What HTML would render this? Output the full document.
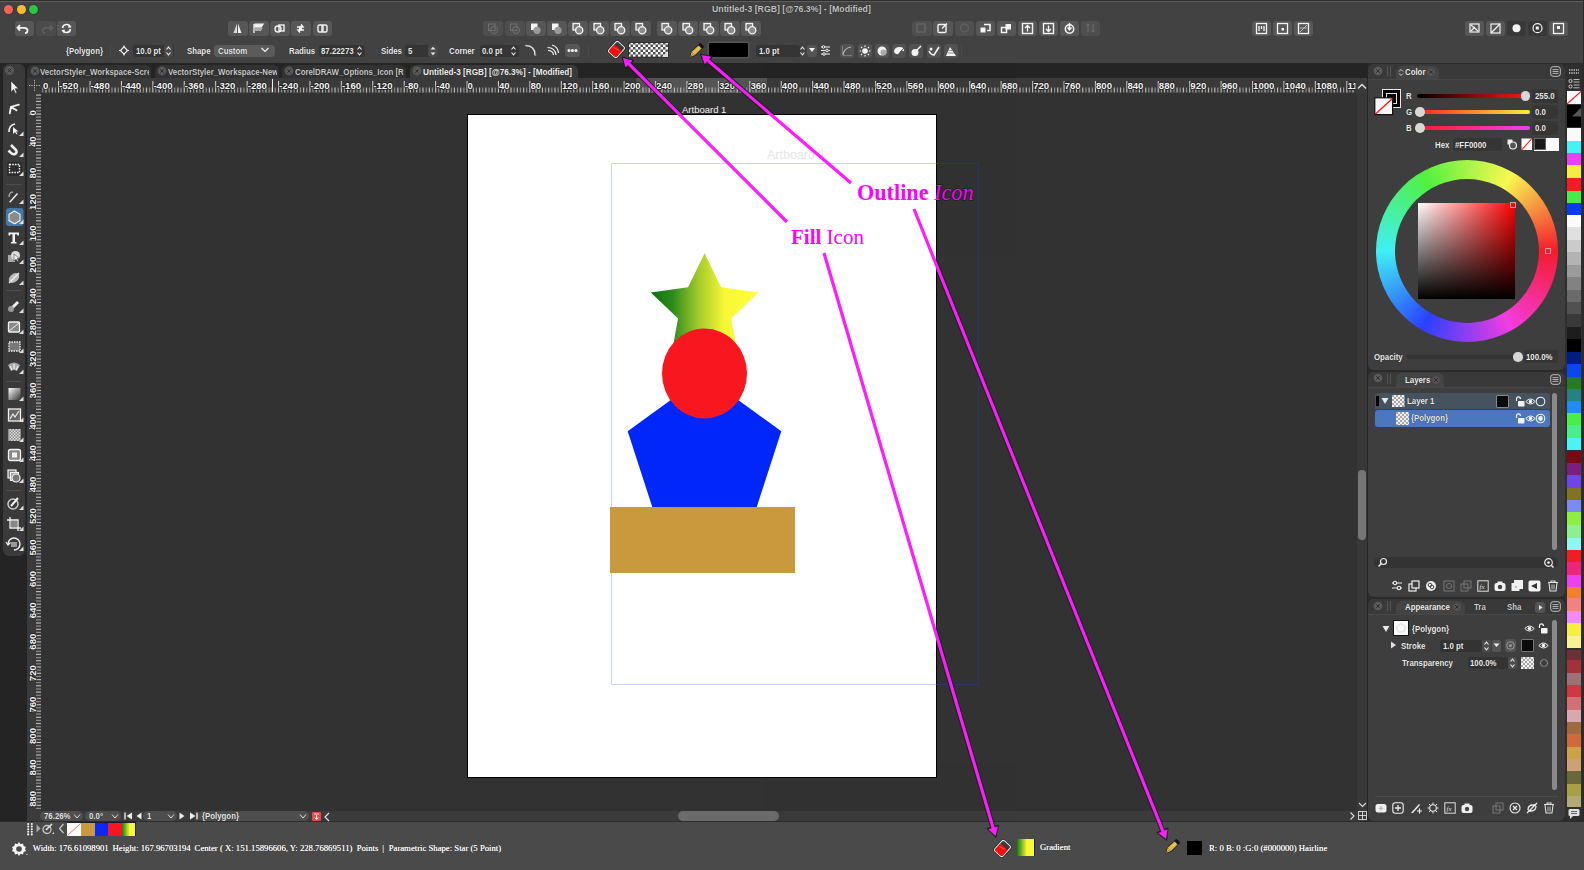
<!DOCTYPE html>
<html><head><meta charset="utf-8"><style>
*{box-sizing:border-box;margin:0;padding:0}
html,body{width:1584px;height:870px;overflow:hidden;background:#424242;font-family:"Liberation Sans",sans-serif;color:#ececec;position:relative}
.a{position:absolute}
.t{position:absolute;white-space:nowrap;font-weight:bold;font-size:9px;line-height:10px;color:#ececec;transform:scaleX(.87);transform-origin:0 0;text-shadow:0 0 1px rgba(0,0,0,.85)}
.btn{position:absolute;top:21px;width:19px;height:14px;background:#575757;border-radius:3px}
.btn.d{background:#4b4b4b}
.ib{position:absolute;width:14px;height:14px;background:#575757;border-radius:3px}
</style></head><body>
<div class="a" style="left:0px;top:0px;width:1584px;height:1px;background:#2e2e2e;"></div>
<div class="a" style="left:0px;top:1px;width:1584px;height:1px;background:#5e5e5e;"></div>
<div class="a" style="left:1583px;top:0px;width:1px;height:63px;background:#2a2a2a;"></div>
<div class="a" style="left:0px;top:63px;width:1584px;height:15px;background:#242424;"></div>
<div class="a" style="left:0px;top:63px;width:27px;height:758px;background:#242424;"></div>
<div class="a" style="left:2.9px;top:64px;width:22.4px;height:492.4px;background:#3a3a3a;border-radius:6px"></div>
<div class="a" style="left:27px;top:78px;width:1341px;height:15px;background:#3a3a3a;border-top-right-radius:7px"></div>
<div class="a" style="left:27px;top:93px;width:14px;height:718px;background:#3a3a3a;"></div>
<div class="a" style="left:41px;top:93px;width:1316px;height:718px;background:#323232;"></div>
<div class="a" style="left:1357px;top:93px;width:11px;height:718px;background:#383838;"></div>
<div class="a" style="left:27px;top:811px;width:1341px;height:10px;background:#3b3b3b;"></div>
<div class="a" style="left:0px;top:821px;width:1584px;height:49px;background:#4a4a4a;"></div>
<div class="a" style="left:0px;top:821px;width:1584px;height:1px;background:#2c2c2c;"></div>
<div class="a" style="left:1368px;top:63px;width:216px;height:758px;background:#2b2b2b;"></div>
<svg width="0" height="0" style="position:absolute"><defs><pattern id="chk5" width="5" height="5" patternUnits="userSpaceOnUse"><rect width="5" height="5" fill="#fafafa"/><rect width="2.5" height="2.5" fill="#4e4e4e"/><rect x="2.5" y="2.5" width="2.5" height="2.5" fill="#4e4e4e"/></pattern><pattern id="chk4" width="4" height="4" patternUnits="userSpaceOnUse"><rect width="4" height="4" fill="#f0f0f0"/><rect width="2" height="2" fill="#a8a8a8"/><rect x="2" y="2" width="2" height="2" fill="#a8a8a8"/></pattern></defs></svg>
<div class="a" style="left:4.1px;top:4.6px;width:9.2px;height:9.2px;border-radius:50%;background:#fe5f57;box-shadow:0 0 0 0.6px #1f3b45"></div>
<div class="a" style="left:16.6px;top:4.6px;width:9.2px;height:9.2px;border-radius:50%;background:#febc2e;box-shadow:0 0 0 0.6px #1f3b45"></div>
<div class="a" style="left:29.0px;top:4.6px;width:9.2px;height:9.2px;border-radius:50%;background:#28c840;box-shadow:0 0 0 0.6px #3b1f45"></div>
<div class="t" style="left:712px;top:4px;font-size:9px;color:#c4c4c4;transform:scaleX(0.97)">Untitled-3 [RGB] [@76.3%] - [Modified]</div>
<div class="a" style="left:14.7px;top:21px;width:19.5px;height:14.5px;background:#575757;border-radius:3px"></div>
<svg class="a" style="left:14.7px;top:21px;opacity:1" width="19" height="14" viewBox="0 0 19 14"><path d="M5 4 L2.5 6.8 L5 9.6 M2.8 6.8 H9 Q12.5 6.8 12.5 9.5 Q12.5 12 10 12.2" stroke="#f4f4f4" stroke-width="1.8" fill="none"/></svg>
<div class="a" style="left:36.2px;top:21px;width:19.5px;height:14.5px;background:#4b4b4b;border-radius:3px"></div>
<svg class="a" style="left:36.2px;top:21px;opacity:0.45" width="19" height="14" viewBox="0 0 19 14"><path d="M14 4 L16.5 6.8 L14 9.6 M16.2 6.8 H10 Q6.5 6.8 6.5 9.5 Q6.5 12 9 12.2" stroke="#777" stroke-width="1.8" fill="none"/></svg>
<div class="a" style="left:56.9px;top:21px;width:19.5px;height:14.5px;background:#575757;border-radius:3px"></div>
<svg class="a" style="left:56.9px;top:21px;opacity:1" width="19" height="14" viewBox="0 0 19 14"><path d="M5.5 7 A4.2 4.2 0 0 1 13.5 6 M13.5 8 A4.2 4.2 0 0 1 5.5 9" stroke="#f4f4f4" stroke-width="1.6" fill="none"/><path d="M12 3.5 L14.5 6.5 L11 6.8Z M7 12 L4.5 9 L8 8.8Z" fill="#f4f4f4"/></svg>
<div class="a" style="left:228px;top:21px;width:19.5px;height:14.5px;background:#575757;border-radius:3px"></div>
<svg class="a" style="left:228px;top:21px;opacity:1" width="19" height="14" viewBox="0 0 19 14"><path d="M9 2.5 L5.5 12 H9Z" fill="#ddd"/><path d="M10 2.5 L13.5 12 H10Z" fill="#f4f4f4"/></svg>
<div class="a" style="left:249px;top:21px;width:19.5px;height:14.5px;background:#575757;border-radius:3px"></div>
<svg class="a" style="left:249px;top:21px;opacity:1" width="19" height="14" viewBox="0 0 19 14"><path d="M5 3 V12 M5.5 3.2 H14 L12 6 H5.5" stroke="#f4f4f4" stroke-width="1.3" fill="#f4f4f4"/><path d="M5.5 6.5 H14 L12 10 H5.5Z" fill="#aaa"/></svg>
<div class="a" style="left:270.4px;top:21px;width:19.5px;height:14.5px;background:#575757;border-radius:3px"></div>
<svg class="a" style="left:270.4px;top:21px;opacity:1" width="19" height="14" viewBox="0 0 19 14"><circle cx="8" cy="8" r="3" stroke="#f4f4f4" stroke-width="1.4" fill="none"/><rect x="9" y="4" width="5" height="6" stroke="#f4f4f4" stroke-width="1.4" fill="none"/></svg>
<div class="a" style="left:291.4px;top:21px;width:19.5px;height:14.5px;background:#575757;border-radius:3px"></div>
<svg class="a" style="left:291.4px;top:21px;opacity:1" width="19" height="14" viewBox="0 0 19 14"><path d="M6 6 H12 L10 3.5 M13 9 H7 L9 11.5" stroke="#f4f4f4" stroke-width="1.5" fill="none"/><rect x="8" y="5.5" width="3" height="4" fill="#f4f4f4"/></svg>
<div class="a" style="left:312.5px;top:21px;width:19.5px;height:14.5px;background:#575757;border-radius:3px"></div>
<svg class="a" style="left:312.5px;top:21px;opacity:1" width="19" height="14" viewBox="0 0 19 14"><rect x="5" y="4" width="5" height="7" rx="1.5" stroke="#f4f4f4" stroke-width="1.4" fill="none"/><rect x="9" y="4" width="5" height="7" rx="1.5" stroke="#f4f4f4" stroke-width="1.4" fill="none"/></svg>
<div class="a" style="left:483px;top:21px;width:19.5px;height:14.5px;background:#4f4f4f;border-radius:3px"></div>
<svg class="a" style="left:483px;top:21px;opacity:0.45" width="19" height="14" viewBox="0 0 19 14"><rect x="5.5" y="3" width="6.5" height="6.5" stroke="#9a9a9a" stroke-width="1" fill="none"/><circle cx="11" cy="9" r="3.5" stroke="#9a9a9a" stroke-width="1" fill="none"/></svg>
<div class="a" style="left:505px;top:21px;width:19.5px;height:14.5px;background:#4f4f4f;border-radius:3px"></div>
<svg class="a" style="left:505px;top:21px;opacity:0.45" width="19" height="14" viewBox="0 0 19 14"><rect x="5.5" y="3" width="6.5" height="6.5" stroke="#9a9a9a" stroke-width="1" fill="none"/><circle cx="11" cy="9" r="3.5" stroke="#9a9a9a" stroke-width="1" fill="none"/></svg>
<div class="a" style="left:526px;top:21px;width:19.5px;height:14.5px;background:#565656;border-radius:3px"></div>
<svg class="a" style="left:526px;top:21px;opacity:1" width="19" height="14" viewBox="0 0 19 14"><rect x="5" y="2.5" width="6.5" height="6.5" fill="#f4f4f4"/><circle cx="11" cy="9.3" r="3.6" fill="#9a9a9a"/></svg>
<div class="a" style="left:547px;top:21px;width:19.5px;height:14.5px;background:#565656;border-radius:3px"></div>
<svg class="a" style="left:547px;top:21px;opacity:1" width="19" height="14" viewBox="0 0 19 14"><rect x="5" y="2.5" width="6.5" height="6.5" fill="#f4f4f4"/><circle cx="11" cy="9.3" r="3.6" fill="#9a9a9a"/></svg>
<div class="a" style="left:568px;top:21px;width:19.5px;height:14.5px;background:#565656;border-radius:3px"></div>
<svg class="a" style="left:568px;top:21px;opacity:1" width="19" height="14" viewBox="0 0 19 14"><rect x="5" y="2.5" width="6.5" height="6.5" stroke="#f4f4f4" stroke-width="1.3" fill="#777"/><circle cx="11.2" cy="9.3" r="3.6" stroke="#f4f4f4" stroke-width="1.3" fill="#8a8a8a"/></svg>
<div class="a" style="left:589px;top:21px;width:19.5px;height:14.5px;background:#565656;border-radius:3px"></div>
<svg class="a" style="left:589px;top:21px;opacity:1" width="19" height="14" viewBox="0 0 19 14"><rect x="5" y="2.5" width="6.5" height="6.5" stroke="#f4f4f4" stroke-width="1.3" fill="#777"/><circle cx="11.2" cy="9.3" r="3.6" stroke="#f4f4f4" stroke-width="1.3" fill="#8a8a8a"/></svg>
<div class="a" style="left:610px;top:21px;width:19.5px;height:14.5px;background:#565656;border-radius:3px"></div>
<svg class="a" style="left:610px;top:21px;opacity:1" width="19" height="14" viewBox="0 0 19 14"><rect x="5" y="2.5" width="6.5" height="6.5" stroke="#f4f4f4" stroke-width="1.3" fill="#777"/><circle cx="11.2" cy="9.3" r="3.6" stroke="#f4f4f4" stroke-width="1.3" fill="#8a8a8a"/></svg>
<div class="a" style="left:631px;top:21px;width:19.5px;height:14.5px;background:#565656;border-radius:3px"></div>
<svg class="a" style="left:631px;top:21px;opacity:1" width="19" height="14" viewBox="0 0 19 14"><rect x="5" y="2.5" width="6.5" height="6.5" stroke="#f4f4f4" stroke-width="1.3" fill="#777"/><circle cx="11.2" cy="9.3" r="3.6" stroke="#f4f4f4" stroke-width="1.3" fill="#8a8a8a"/></svg>
<div class="a" style="left:657px;top:21px;width:19.5px;height:14.5px;background:#575757;border-radius:3px"></div>
<svg class="a" style="left:657px;top:21px;opacity:1" width="19" height="14" viewBox="0 0 19 14"><rect x="5" y="2.5" width="6.5" height="6.5" stroke="#f4f4f4" stroke-width="1.3" fill="#777"/><circle cx="11.2" cy="9.3" r="3.6" stroke="#f4f4f4" stroke-width="1.3" fill="#8a8a8a"/></svg>
<div class="a" style="left:678px;top:21px;width:19.5px;height:14.5px;background:#575757;border-radius:3px"></div>
<svg class="a" style="left:678px;top:21px;opacity:1" width="19" height="14" viewBox="0 0 19 14"><rect x="5" y="2.5" width="6.5" height="6.5" stroke="#f4f4f4" stroke-width="1.3" fill="#777"/><circle cx="11.2" cy="9.3" r="3.6" stroke="#f4f4f4" stroke-width="1.3" fill="#8a8a8a"/></svg>
<div class="a" style="left:699px;top:21px;width:19.5px;height:14.5px;background:#575757;border-radius:3px"></div>
<svg class="a" style="left:699px;top:21px;opacity:1" width="19" height="14" viewBox="0 0 19 14"><rect x="5" y="2.5" width="6.5" height="6.5" stroke="#f4f4f4" stroke-width="1.3" fill="#777"/><circle cx="11.2" cy="9.3" r="3.6" stroke="#f4f4f4" stroke-width="1.3" fill="#8a8a8a"/></svg>
<div class="a" style="left:720px;top:21px;width:19.5px;height:14.5px;background:#575757;border-radius:3px"></div>
<svg class="a" style="left:720px;top:21px;opacity:1" width="19" height="14" viewBox="0 0 19 14"><rect x="5" y="2.5" width="6.5" height="6.5" stroke="#f4f4f4" stroke-width="1.3" fill="#777"/><circle cx="11.2" cy="9.3" r="3.6" stroke="#f4f4f4" stroke-width="1.3" fill="#8a8a8a"/></svg>
<div class="a" style="left:741px;top:21px;width:19.5px;height:14.5px;background:#575757;border-radius:3px"></div>
<svg class="a" style="left:741px;top:21px;opacity:1" width="19" height="14" viewBox="0 0 19 14"><rect x="5" y="2.5" width="6.5" height="6.5" stroke="#f4f4f4" stroke-width="1.3" fill="#777"/><circle cx="11.2" cy="9.3" r="3.6" stroke="#f4f4f4" stroke-width="1.3" fill="#8a8a8a"/></svg>
<div class="a" style="left:912px;top:21px;width:19.5px;height:14.5px;background:#4f4f4f;border-radius:3px"></div>
<svg class="a" style="left:912px;top:21px;opacity:0.45" width="19" height="14" viewBox="0 0 19 14"><rect x="5" y="3" width="8" height="8" stroke="#888" stroke-width="1.2" fill="none"/></svg>
<div class="a" style="left:933px;top:21px;width:19.5px;height:14.5px;background:#575757;border-radius:3px"></div>
<svg class="a" style="left:933px;top:21px;opacity:1" width="19" height="14" viewBox="0 0 19 14"><rect x="5" y="3.5" width="8" height="8" rx="1" stroke="#f4f4f4" stroke-width="1.4" fill="none"/><path d="M9 7.5 L14 2.5" stroke="#f4f4f4" stroke-width="1.5"/></svg>
<div class="a" style="left:954.5px;top:21px;width:19.5px;height:14.5px;background:#4f4f4f;border-radius:3px"></div>
<svg class="a" style="left:954.5px;top:21px;opacity:0.45" width="19" height="14" viewBox="0 0 19 14"><circle cx="9.5" cy="7" r="4" stroke="#777" stroke-width="1.3" fill="none"/></svg>
<div class="a" style="left:975.5px;top:21px;width:19.5px;height:14.5px;background:#575757;border-radius:3px"></div>
<svg class="a" style="left:975.5px;top:21px;opacity:1" width="19" height="14" viewBox="0 0 19 14"><rect x="4.5" y="6.5" width="5" height="5" fill="#f4f4f4"/><path d="M8 3.5 H14 V9.5 H11" stroke="#f4f4f4" stroke-width="1.6" fill="none"/></svg>
<div class="a" style="left:996.5px;top:21px;width:19.5px;height:14.5px;background:#575757;border-radius:3px"></div>
<svg class="a" style="left:996.5px;top:21px;opacity:1" width="19" height="14" viewBox="0 0 19 14"><rect x="4.5" y="6.5" width="5" height="5" stroke="#f4f4f4" stroke-width="1.5" fill="none"/><rect x="8.5" y="3" width="5.5" height="5.5" fill="#f4f4f4"/></svg>
<div class="a" style="left:1017.7px;top:21px;width:19.5px;height:14.5px;background:#575757;border-radius:3px"></div>
<svg class="a" style="left:1017.7px;top:21px;opacity:1" width="19" height="14" viewBox="0 0 19 14"><rect x="4.5" y="2.5" width="10" height="10" stroke="#f4f4f4" stroke-width="1.4" fill="none"/><path d="M9.5 10.5 V5 M7 7 L9.5 4.5 L12 7" stroke="#f4f4f4" stroke-width="1.4" fill="none"/></svg>
<div class="a" style="left:1038.6px;top:21px;width:19.5px;height:14.5px;background:#575757;border-radius:3px"></div>
<svg class="a" style="left:1038.6px;top:21px;opacity:1" width="19" height="14" viewBox="0 0 19 14"><rect x="4.5" y="2.5" width="10" height="10" stroke="#f4f4f4" stroke-width="1.4" fill="none"/><path d="M9.5 4.5 V10 M7 8 L9.5 10.5 L12 8" stroke="#f4f4f4" stroke-width="1.4" fill="none"/></svg>
<div class="a" style="left:1059.6px;top:21px;width:19.5px;height:14.5px;background:#575757;border-radius:3px"></div>
<svg class="a" style="left:1059.6px;top:21px;opacity:1" width="19" height="14" viewBox="0 0 19 14"><circle cx="9.5" cy="8" r="4.2" stroke="#f4f4f4" stroke-width="1.5" fill="none"/><path d="M9.5 2 V8.5 M7.5 6.5 L9.5 8.8 L11.5 6.5" stroke="#f4f4f4" stroke-width="1.5" fill="none"/></svg>
<div class="a" style="left:1080.8px;top:21px;width:19.5px;height:14.5px;background:#4f4f4f;border-radius:3px"></div>
<svg class="a" style="left:1080.8px;top:21px;opacity:0.45" width="19" height="14" viewBox="0 0 19 14"><path d="M7 3 V11 M12 3 V11 M5.5 4.5 L7 3 L8.5 4.5 M10.5 9.5 L12 11 L13.5 9.5" stroke="#8a8a8a" stroke-width="1.2" fill="none"/></svg>
<div class="a" style="left:1251.7px;top:21px;width:19.5px;height:14.5px;background:#575757;border-radius:3px"></div>
<svg class="a" style="left:1251.7px;top:21px;opacity:1" width="19" height="14" viewBox="0 0 19 14"><rect x="4.5" y="2.5" width="10" height="10" stroke="#f4f4f4" stroke-width="1.3" fill="none"/><path d="M7 5 V10 M9.5 5 V8 M12 5 V10" stroke="#f4f4f4" stroke-width="1.3"/></svg>
<div class="a" style="left:1272.9px;top:21px;width:19.5px;height:14.5px;background:#575757;border-radius:3px"></div>
<svg class="a" style="left:1272.9px;top:21px;opacity:1" width="19" height="14" viewBox="0 0 19 14"><rect x="4.5" y="2.5" width="10" height="10" stroke="#f4f4f4" stroke-width="1.3" fill="none"/><rect x="8.5" y="7" width="2.5" height="2.5" fill="#f4f4f4"/></svg>
<div class="a" style="left:1293.8px;top:21px;width:19.5px;height:14.5px;background:#575757;border-radius:3px"></div>
<svg class="a" style="left:1293.8px;top:21px;opacity:1" width="19" height="14" viewBox="0 0 19 14"><rect x="4.5" y="2.5" width="10" height="10" stroke="#f4f4f4" stroke-width="1.3" fill="none"/><path d="M6 11 L13 4 M6 7 H13" stroke="#bbb" stroke-width="1"/></svg>
<div class="a" style="left:1464.8px;top:21px;width:19.5px;height:14.5px;background:#575757;border-radius:3px"></div>
<svg class="a" style="left:1464.8px;top:21px;opacity:1" width="19" height="14" viewBox="0 0 19 14"><rect x="5" y="3" width="9" height="8" stroke="#f4f4f4" stroke-width="1.2" fill="none"/><path d="M6 4 L13 10 M6 10 L10 6" stroke="#f4f4f4" stroke-width="1.2"/></svg>
<div class="a" style="left:1485.8px;top:21px;width:19.5px;height:14.5px;background:#575757;border-radius:3px"></div>
<svg class="a" style="left:1485.8px;top:21px;opacity:1" width="19" height="14" viewBox="0 0 19 14"><rect x="5" y="3" width="9" height="9" stroke="#f4f4f4" stroke-width="1.2" fill="none"/><path d="M5 12 L14 3" stroke="#f4f4f4" stroke-width="1.2"/></svg>
<div class="a" style="left:1506.7px;top:21px;width:19.5px;height:14.5px;background:#383838;border-radius:3px"></div>
<svg class="a" style="left:1506.7px;top:21px;opacity:1" width="19" height="14" viewBox="0 0 19 14"><circle cx="9.5" cy="7.2" r="4" fill="#f4f4f4"/></svg>
<div class="a" style="left:1527.9px;top:21px;width:19.5px;height:14.5px;background:#383838;border-radius:3px"></div>
<svg class="a" style="left:1527.9px;top:21px;opacity:1" width="19" height="14" viewBox="0 0 19 14"><circle cx="9.5" cy="7.2" r="4.5" stroke="#f4f4f4" stroke-width="1.2" fill="none"/><rect x="7.8" y="5.5" width="3" height="3" fill="#f4f4f4"/></svg>
<div class="a" style="left:1548.9px;top:21px;width:19.5px;height:14.5px;background:#575757;border-radius:3px"></div>
<svg class="a" style="left:1548.9px;top:21px;opacity:1" width="19" height="14" viewBox="0 0 19 14"><rect x="4.5" y="2.5" width="10" height="10" stroke="#f4f4f4" stroke-width="1.3" fill="none"/><rect x="8" y="5" width="3" height="3" fill="#f4f4f4"/></svg>
<div class="t" style="left:66px;top:45.5px;font-size:9px;color:#ececec;font-weight:bold;">{Polygon}</div>
<div class="a" style="left:110px;top:44px;width:1px;height:13px;background:#4a4a4a;"></div>
<svg class="a" style="left:118px;top:44px;opacity:1" width="12" height="13" viewBox="0 0 12 13"><path d="M6 1.5 V11.5 M1 6.5 H11" stroke="#f4f4f4" stroke-width="1.1"/><rect x="3.5" y="4" width="5" height="5" transform="rotate(45 6 6.5)" stroke="#f4f4f4" stroke-width="1.2" fill="#3f3f3f"/></svg>
<div class="a" style="left:132.6px;top:44.5px;width:41px;height:12px;background:#353535;border-radius:3px"></div>
<div class="t" style="left:135.5px;top:45.5px;font-size:9px;color:#ececec;font-weight:bold;">10.0 pt</div>
<div class="a" style="left:164px;top:44.5px;width:9px;height:12px;background:#4a4a4a;border-radius:3px"></div>
<svg class="a" style="left:165px;top:44.5px;opacity:1" width="7" height="12" viewBox="0 0 7 12"><path d="M1.5 4.5 L3.5 2.2 L5.5 4.5 M1.5 7.5 L3.5 9.8 L5.5 7.5" stroke="#e8e8e8" stroke-width="1.1" fill="none"/></svg>
<div class="t" style="left:187px;top:45.5px;font-size:9px;color:#ececec;font-weight:bold;">Shape</div>
<div class="a" style="left:214px;top:44.5px;width:60.7px;height:12px;background:#5b5b5b;border-radius:4px"></div>
<div class="t" style="left:218px;top:45.5px;font-size:9px;color:#ececec;font-weight:bold;">Custom</div>
<svg class="a" style="left:260px;top:46px;opacity:1" width="10" height="8" viewBox="0 0 10 8"><path d="M1.5 2 L5 5.5 L8.5 2" stroke="#f4f4f4" stroke-width="1.2" fill="none"/></svg>
<div class="t" style="left:289px;top:45.5px;font-size:9px;color:#ececec;font-weight:bold;">Radius</div>
<div class="a" style="left:318.7px;top:44.5px;width:46px;height:12px;background:#353535;border-radius:3px"></div>
<div class="t" style="left:321px;top:45.5px;font-size:9px;color:#ececec;font-weight:bold;">87.22273</div>
<svg class="a" style="left:356px;top:44.5px;opacity:1" width="7" height="12" viewBox="0 0 7 12"><path d="M1.5 4.5 L3.5 2.2 L5.5 4.5 M1.5 7.5 L3.5 9.8 L5.5 7.5" stroke="#e8e8e8" stroke-width="1.1" fill="none"/></svg>
<div class="t" style="left:380.6px;top:45.5px;font-size:9px;color:#ececec;font-weight:bold;">Sides</div>
<div class="a" style="left:405px;top:44.5px;width:33px;height:12px;background:#353535;border-radius:3px"></div>
<div class="t" style="left:407.6px;top:45.5px;font-size:9px;color:#ececec;font-weight:bold;">5</div>
<div class="a" style="left:428px;top:44.5px;width:10px;height:12px;background:#4a4a4a;border-radius:3px"></div>
<svg class="a" style="left:429px;top:44.5px;opacity:1" width="8" height="12" viewBox="0 0 8 12"><path d="M1.5 4.5 L4 1.8 L6.5 4.5Z M1.5 7.5 L4 10.2 L6.5 7.5Z" fill="#e8e8e8"/></svg>
<div class="t" style="left:449px;top:45.5px;font-size:9px;color:#ececec;font-weight:bold;">Corner</div>
<div class="a" style="left:479.5px;top:44.5px;width:39px;height:12px;background:#353535;border-radius:3px"></div>
<div class="t" style="left:482px;top:45.5px;font-size:9px;color:#ececec;font-weight:bold;">0.0 pt</div>
<svg class="a" style="left:510px;top:44.5px;opacity:1" width="7" height="12" viewBox="0 0 7 12"><path d="M1.5 4.5 L3.5 2.2 L5.5 4.5 M1.5 7.5 L3.5 9.8 L5.5 7.5" stroke="#e8e8e8" stroke-width="1.1" fill="none"/></svg>
<svg class="a" style="left:524px;top:43px;opacity:1" width="14" height="15" viewBox="0 0 14 15"><path d="M1.5 2.5 Q11 2.5 11 12.5" stroke="#f4f4f4" stroke-width="1.3" fill="none"/><path d="M1 2.5 Q11.5 1.5 12 13" stroke="#999" stroke-width="0.6" fill="none"/></svg>
<svg class="a" style="left:546px;top:43px;opacity:1" width="14" height="15" viewBox="0 0 14 15"><path d="M1.5 4.5 Q9 4.5 10 12 M2 7.5 Q7 7.5 7.5 12 M6 2 Q12 3.5 12.5 10" stroke="#f4f4f4" stroke-width="1.2" fill="none"/></svg>
<div class="a" style="left:565.4px;top:43.5px;width:15px;height:13px;background:#575757;border-radius:4px"></div>
<svg class="a" style="left:565.4px;top:43.5px;opacity:1" width="15" height="13" viewBox="0 0 15 13"><circle cx="4" cy="6.5" r="1.5" fill="#f4f4f4"/><circle cx="7.5" cy="6.5" r="1.5" fill="#f4f4f4"/><circle cx="11" cy="6.5" r="1.5" fill="#f4f4f4"/></svg>
<div class="a" style="left:588px;top:44px;width:1px;height:13px;background:#4a4a4a;"></div>
<svg class="a" style="left:607px;top:40px;opacity:1" width="19" height="19" viewBox="0 0 19 19"><g transform="rotate(42 9.5 9.5)"><rect x="4" y="2.5" width="11" height="14" rx="2" fill="#2a2a2a" stroke="#101818" stroke-width="2.2"/><rect x="4" y="2.5" width="11" height="14" rx="2" fill="#3a3a3a" stroke="#e8e8e8" stroke-width="1.1"/><path d="M4.6 7.5 Q9.5 6 14.4 7.5 V14.5 Q14.4 15.9 13 15.9 H6 Q4.6 15.9 4.6 14.5Z" fill="#ff0a0a"/><path d="M6 10 L12 8.5" stroke="#ff8080" stroke-width="0.6"/></g></svg>
<svg class="a" style="left:627.7px;top:41.9px" width="41" height="15.7" viewBox="0 0 41 15.7"><rect x="0" y="0" width="41" height="15.7" rx="2" fill="#2e2e2e"/><rect x="1" y="1" width="39" height="13.7" fill="url(#chk5)"/></svg>
<svg class="a" style="left:662px;top:51px;opacity:1" width="6" height="6" viewBox="0 0 6 6"><path d="M6 0 V6 H0Z" fill="#ddd"/></svg>
<svg class="a" style="left:688px;top:42px;opacity:1" width="17" height="17" viewBox="0 0 17 17"><path d="M1.5 15.5 L3 9.5 L10.5 2.5 L14.5 6.5 L7.5 13.8Z" fill="#1a2030"/><path d="M2.3 14.7 L3.7 9.8 L10.5 3.5 L13.5 6.5 L7 13Z" fill="#e4b63a"/><path d="M2.3 14.7 L9 8 M3.7 9.8 L7 13" stroke="#a07a18" stroke-width="0.7"/><path d="M10.5 2.5 L12.3 0.8 L16.2 4.7 L14.5 6.5Z" fill="#111"/><path d="M5 11.5 L12 5" stroke="#fff3b0" stroke-width="0.6"/></svg>
<div class="a" style="left:709.3px;top:43px;width:39.2px;height:14px;background:#000;box-shadow:0 0 0 1.5px #555;border-radius:1px"></div>
<div class="a" style="left:756px;top:44.5px;width:44px;height:12px;background:#353535;border-radius:3px"></div>
<div class="t" style="left:759px;top:45.5px;font-size:9px;color:#ececec;font-weight:bold;">1.0 pt</div>
<svg class="a" style="left:799px;top:44.5px;opacity:1" width="7" height="12" viewBox="0 0 7 12"><path d="M1.5 4.5 L3.5 2.2 L5.5 4.5 M1.5 7.5 L3.5 9.8 L5.5 7.5" stroke="#e8e8e8" stroke-width="1.1" fill="none"/></svg>
<div class="a" style="left:807px;top:44.5px;width:10px;height:12px;background:#555;border-radius:3px"></div>
<svg class="a" style="left:808px;top:46px;opacity:1" width="8" height="8" viewBox="0 0 8 8"><path d="M1 2 L4 6 L7 2Z" fill="#f4f4f4"/></svg>
<svg class="a" style="left:820px;top:44px;opacity:1" width="11" height="13" viewBox="0 0 11 13"><path d="M1 3 H10 M1 6.5 H10 M1 10 H10" stroke="#f4f4f4" stroke-width="1"/><circle cx="3.5" cy="3" r="1.3" fill="#3f3f3f" stroke="#f4f4f4"/><circle cx="7" cy="6.5" r="1.3" fill="#3f3f3f" stroke="#f4f4f4"/><circle cx="4" cy="10" r="1.3" fill="#3f3f3f" stroke="#f4f4f4"/></svg>
<div class="a" style="left:840.4px;top:43.5px;width:14px;height:14px;background:#525252;border-radius:3px"></div>
<svg class="a" style="left:840.4px;top:43.5px;opacity:1" width="14" height="14" viewBox="0 0 14 14"><path d="M3 11 Q4 4 11 3" stroke="#bbb" stroke-width="1.1" fill="none"/><path d="M2.5 2 V11.5 H12" stroke="#888" stroke-width="0.8" fill="none"/></svg>
<div class="a" style="left:857.6px;top:43.5px;width:14px;height:14px;background:#525252;border-radius:3px"></div>
<svg class="a" style="left:857.6px;top:43.5px;opacity:1" width="14" height="14" viewBox="0 0 14 14"><circle cx="7" cy="7" r="2.8" fill="#f4f4f4"/><path d="M7 1.5 V3 M7 11 V12.5 M1.5 7 H3 M11 7 H12.5 M3 3 L4 4 M10 10 L11 11 M11 3 L10 4 M3 11 L4 10" stroke="#f4f4f4" stroke-width="1.2"/></svg>
<div class="a" style="left:875px;top:43.5px;width:14px;height:14px;background:#525252;border-radius:3px"></div>
<svg class="a" style="left:875px;top:43.5px;opacity:1" width="14" height="14" viewBox="0 0 14 14"><circle cx="7" cy="7" r="4.5" fill="#f4f4f4"/><circle cx="8.5" cy="8.5" r="3" fill="#aaa"/></svg>
<div class="a" style="left:892px;top:43.5px;width:14px;height:14px;background:#525252;border-radius:3px"></div>
<svg class="a" style="left:892px;top:43.5px;opacity:1" width="14" height="14" viewBox="0 0 14 14"><path d="M2 8 Q2 3 8 3 Q12 3 12 7 Q9 6 7 9 Q5 12 2 8Z" fill="#f4f4f4"/><path d="M8 8 L12.5 3.5" stroke="#555" stroke-width="1"/></svg>
<div class="a" style="left:909px;top:43.5px;width:14px;height:14px;background:#525252;border-radius:3px"></div>
<svg class="a" style="left:909px;top:43.5px;opacity:1" width="14" height="14" viewBox="0 0 14 14"><circle cx="6" cy="8.5" r="3.5" fill="#f4f4f4"/><path d="M7 7 L12 2" stroke="#f4f4f4" stroke-width="1.5"/></svg>
<div class="a" style="left:926.5px;top:43.5px;width:14px;height:14px;background:#525252;border-radius:3px"></div>
<svg class="a" style="left:926.5px;top:43.5px;opacity:1" width="14" height="14" viewBox="0 0 14 14"><path d="M2 7 Q4 11 7 11 L12 3" stroke="#f4f4f4" stroke-width="1.6" fill="none"/><circle cx="4" cy="5" r="1.5" fill="#f4f4f4"/></svg>
<div class="a" style="left:944px;top:43.5px;width:14px;height:14px;background:#525252;border-radius:3px"></div>
<svg class="a" style="left:944px;top:43.5px;opacity:1" width="14" height="14" viewBox="0 0 14 14"><path d="M2 12 L6 3 L12 12Z" fill="#f4f4f4"/><path d="M4 9 H10 M5 6.5 H9" stroke="#777" stroke-width="0.8"/></svg>
<div class="a" style="left:961px;top:44px;width:1px;height:13px;background:#4a4a4a;"></div>
<div class="a" style="left:27.3px;top:64.5px;width:124.2px;height:13.5px;background:#323232;border-radius:6px 6px 0 0"></div>
<svg class="a" style="left:29.8px;top:66.2px;opacity:1" width="10" height="10" viewBox="0 0 10 10"><circle cx="5" cy="5" r="4.4" fill="#585858"/><path d="M3.3 3.3 L6.7 6.7 M6.7 3.3 L3.3 6.7" stroke="#2a2a2a" stroke-width="0.9"/></svg>
<div class="a" style="left:40.3px;top:64.5px;width:109.2px;height:13.5px;overflow:hidden"><div class="t" style="left:0;top:2px;font-size:9px;color:#cacaca;transform:scaleX(0.87)">VectorStyler_Workspace-Screenshot</div></div>
<div class="a" style="left:154.5px;top:64.5px;width:124.5px;height:13.5px;background:#323232;border-radius:6px 6px 0 0"></div>
<svg class="a" style="left:157.0px;top:66.2px;opacity:1" width="10" height="10" viewBox="0 0 10 10"><circle cx="5" cy="5" r="4.4" fill="#585858"/><path d="M3.3 3.3 L6.7 6.7 M6.7 3.3 L3.3 6.7" stroke="#2a2a2a" stroke-width="0.9"/></svg>
<div class="a" style="left:167.5px;top:64.5px;width:109.5px;height:13.5px;overflow:hidden"><div class="t" style="left:0;top:2px;font-size:9px;color:#cacaca;transform:scaleX(0.87)">VectorStyler_Workspace-New</div></div>
<div class="a" style="left:281.6px;top:64.5px;width:124.4px;height:13.5px;background:#323232;border-radius:6px 6px 0 0"></div>
<svg class="a" style="left:284.1px;top:66.2px;opacity:1" width="10" height="10" viewBox="0 0 10 10"><circle cx="5" cy="5" r="4.4" fill="#585858"/><path d="M3.3 3.3 L6.7 6.7 M6.7 3.3 L3.3 6.7" stroke="#2a2a2a" stroke-width="0.9"/></svg>
<div class="a" style="left:294.6px;top:64.5px;width:109.4px;height:13.5px;overflow:hidden"><div class="t" style="left:0;top:2px;font-size:9px;color:#cacaca;transform:scaleX(0.87)">CorelDRAW_Options_Icon [RGB]</div></div>
<div class="a" style="left:409.6px;top:64.5px;width:168.4px;height:13.5px;background:#3b3b3b;border-radius:6px 6px 0 0"></div>
<svg class="a" style="left:412.1px;top:66.2px;opacity:1" width="10" height="10" viewBox="0 0 10 10"><circle cx="5" cy="5" r="4.4" fill="#585858"/><path d="M3.3 3.3 L6.7 6.7 M6.7 3.3 L3.3 6.7" stroke="#2a2a2a" stroke-width="0.9"/></svg>
<div class="a" style="left:422.6px;top:64.5px;width:153.4px;height:13.5px;overflow:hidden"><div class="t" style="left:0;top:2px;font-size:9px;color:#f2f2f2;transform:scaleX(0.91)">Untitled-3 [RGB] [@76.3%] - [Modified]</div></div>
<svg class="a" style="left:0;top:78px" width="1368" height="15" viewBox="0 78 1368 15"><rect x="636.5" y="78" width="130.5" height="15" fill="#545454"/><rect x="42.2" y="87.5" width="1.2" height="5" fill="#8c8c8c"/><rect x="45.4" y="87.5" width="1.2" height="5" fill="#b8b8b8"/><rect x="48.5" y="87.5" width="1.2" height="5" fill="#8c8c8c"/><rect x="51.7" y="87.5" width="1.2" height="5" fill="#b8b8b8"/><rect x="54.8" y="87.5" width="1.2" height="5" fill="#8c8c8c"/><rect x="58.0" y="81" width="1.1" height="11.5" fill="#c8c8c8"/><rect x="61.1" y="87.5" width="1.2" height="5" fill="#8c8c8c"/><rect x="64.2" y="87.5" width="1.2" height="5" fill="#b8b8b8"/><rect x="67.4" y="87.5" width="1.2" height="5" fill="#8c8c8c"/><rect x="70.5" y="87.5" width="1.2" height="5" fill="#b8b8b8"/><rect x="73.7" y="87.5" width="1.2" height="5" fill="#8c8c8c"/><rect x="76.8" y="87.5" width="1.2" height="5" fill="#b8b8b8"/><rect x="79.9" y="87.5" width="1.2" height="5" fill="#8c8c8c"/><rect x="83.1" y="87.5" width="1.2" height="5" fill="#b8b8b8"/><rect x="86.2" y="87.5" width="1.2" height="5" fill="#8c8c8c"/><rect x="89.5" y="81" width="1.1" height="11.5" fill="#c8c8c8"/><rect x="92.5" y="87.5" width="1.2" height="5" fill="#8c8c8c"/><rect x="95.6" y="87.5" width="1.2" height="5" fill="#b8b8b8"/><rect x="98.8" y="87.5" width="1.2" height="5" fill="#8c8c8c"/><rect x="101.9" y="87.5" width="1.2" height="5" fill="#b8b8b8"/><rect x="105.1" y="87.5" width="1.2" height="5" fill="#8c8c8c"/><rect x="108.2" y="87.5" width="1.2" height="5" fill="#b8b8b8"/><rect x="111.4" y="87.5" width="1.2" height="5" fill="#8c8c8c"/><rect x="114.5" y="87.5" width="1.2" height="5" fill="#b8b8b8"/><rect x="117.6" y="87.5" width="1.2" height="5" fill="#8c8c8c"/><rect x="120.9" y="81" width="1.1" height="11.5" fill="#c8c8c8"/><rect x="123.9" y="87.5" width="1.2" height="5" fill="#8c8c8c"/><rect x="127.1" y="87.5" width="1.2" height="5" fill="#b8b8b8"/><rect x="130.2" y="87.5" width="1.2" height="5" fill="#8c8c8c"/><rect x="133.3" y="87.5" width="1.2" height="5" fill="#b8b8b8"/><rect x="136.5" y="87.5" width="1.2" height="5" fill="#8c8c8c"/><rect x="139.6" y="87.5" width="1.2" height="5" fill="#b8b8b8"/><rect x="142.8" y="87.5" width="1.2" height="5" fill="#8c8c8c"/><rect x="145.9" y="87.5" width="1.2" height="5" fill="#b8b8b8"/><rect x="149.1" y="87.5" width="1.2" height="5" fill="#8c8c8c"/><rect x="152.3" y="81" width="1.1" height="11.5" fill="#c8c8c8"/><rect x="155.3" y="87.5" width="1.2" height="5" fill="#8c8c8c"/><rect x="158.5" y="87.5" width="1.2" height="5" fill="#b8b8b8"/><rect x="161.6" y="87.5" width="1.2" height="5" fill="#8c8c8c"/><rect x="164.8" y="87.5" width="1.2" height="5" fill="#b8b8b8"/><rect x="167.9" y="87.5" width="1.2" height="5" fill="#8c8c8c"/><rect x="171.1" y="87.5" width="1.2" height="5" fill="#b8b8b8"/><rect x="174.2" y="87.5" width="1.2" height="5" fill="#8c8c8c"/><rect x="177.3" y="87.5" width="1.2" height="5" fill="#b8b8b8"/><rect x="180.5" y="87.5" width="1.2" height="5" fill="#8c8c8c"/><rect x="183.7" y="81" width="1.1" height="11.5" fill="#c8c8c8"/><rect x="186.8" y="87.5" width="1.2" height="5" fill="#8c8c8c"/><rect x="189.9" y="87.5" width="1.2" height="5" fill="#b8b8b8"/><rect x="193.0" y="87.5" width="1.2" height="5" fill="#8c8c8c"/><rect x="196.2" y="87.5" width="1.2" height="5" fill="#b8b8b8"/><rect x="199.3" y="87.5" width="1.2" height="5" fill="#8c8c8c"/><rect x="202.5" y="87.5" width="1.2" height="5" fill="#b8b8b8"/><rect x="205.6" y="87.5" width="1.2" height="5" fill="#8c8c8c"/><rect x="208.8" y="87.5" width="1.2" height="5" fill="#b8b8b8"/><rect x="211.9" y="87.5" width="1.2" height="5" fill="#8c8c8c"/><rect x="215.1" y="81" width="1.1" height="11.5" fill="#c8c8c8"/><rect x="218.2" y="87.5" width="1.2" height="5" fill="#8c8c8c"/><rect x="221.3" y="87.5" width="1.2" height="5" fill="#b8b8b8"/><rect x="224.5" y="87.5" width="1.2" height="5" fill="#8c8c8c"/><rect x="227.6" y="87.5" width="1.2" height="5" fill="#b8b8b8"/><rect x="230.8" y="87.5" width="1.2" height="5" fill="#8c8c8c"/><rect x="233.9" y="87.5" width="1.2" height="5" fill="#b8b8b8"/><rect x="237.0" y="87.5" width="1.2" height="5" fill="#8c8c8c"/><rect x="240.2" y="87.5" width="1.2" height="5" fill="#b8b8b8"/><rect x="243.3" y="87.5" width="1.2" height="5" fill="#8c8c8c"/><rect x="246.6" y="81" width="1.1" height="11.5" fill="#c8c8c8"/><rect x="249.6" y="87.5" width="1.2" height="5" fill="#8c8c8c"/><rect x="252.7" y="87.5" width="1.2" height="5" fill="#b8b8b8"/><rect x="255.9" y="87.5" width="1.2" height="5" fill="#8c8c8c"/><rect x="259.0" y="87.5" width="1.2" height="5" fill="#b8b8b8"/><rect x="262.2" y="87.5" width="1.2" height="5" fill="#8c8c8c"/><rect x="265.3" y="87.5" width="1.2" height="5" fill="#b8b8b8"/><rect x="268.5" y="87.5" width="1.2" height="5" fill="#8c8c8c"/><rect x="271.6" y="87.5" width="1.2" height="5" fill="#b8b8b8"/><rect x="274.7" y="87.5" width="1.2" height="5" fill="#8c8c8c"/><rect x="278.0" y="81" width="1.1" height="11.5" fill="#c8c8c8"/><rect x="281.0" y="87.5" width="1.2" height="5" fill="#8c8c8c"/><rect x="284.2" y="87.5" width="1.2" height="5" fill="#b8b8b8"/><rect x="287.3" y="87.5" width="1.2" height="5" fill="#8c8c8c"/><rect x="290.4" y="87.5" width="1.2" height="5" fill="#b8b8b8"/><rect x="293.6" y="87.5" width="1.2" height="5" fill="#8c8c8c"/><rect x="296.7" y="87.5" width="1.2" height="5" fill="#b8b8b8"/><rect x="299.9" y="87.5" width="1.2" height="5" fill="#8c8c8c"/><rect x="303.0" y="87.5" width="1.2" height="5" fill="#b8b8b8"/><rect x="306.2" y="87.5" width="1.2" height="5" fill="#8c8c8c"/><rect x="309.4" y="81" width="1.1" height="11.5" fill="#c8c8c8"/><rect x="312.4" y="87.5" width="1.2" height="5" fill="#8c8c8c"/><rect x="315.6" y="87.5" width="1.2" height="5" fill="#b8b8b8"/><rect x="318.7" y="87.5" width="1.2" height="5" fill="#8c8c8c"/><rect x="321.9" y="87.5" width="1.2" height="5" fill="#b8b8b8"/><rect x="325.0" y="87.5" width="1.2" height="5" fill="#8c8c8c"/><rect x="328.2" y="87.5" width="1.2" height="5" fill="#b8b8b8"/><rect x="331.3" y="87.5" width="1.2" height="5" fill="#8c8c8c"/><rect x="334.4" y="87.5" width="1.2" height="5" fill="#b8b8b8"/><rect x="337.6" y="87.5" width="1.2" height="5" fill="#8c8c8c"/><rect x="340.8" y="81" width="1.1" height="11.5" fill="#c8c8c8"/><rect x="343.9" y="87.5" width="1.2" height="5" fill="#8c8c8c"/><rect x="347.0" y="87.5" width="1.2" height="5" fill="#b8b8b8"/><rect x="350.1" y="87.5" width="1.2" height="5" fill="#8c8c8c"/><rect x="353.3" y="87.5" width="1.2" height="5" fill="#b8b8b8"/><rect x="356.4" y="87.5" width="1.2" height="5" fill="#8c8c8c"/><rect x="359.6" y="87.5" width="1.2" height="5" fill="#b8b8b8"/><rect x="362.7" y="87.5" width="1.2" height="5" fill="#8c8c8c"/><rect x="365.9" y="87.5" width="1.2" height="5" fill="#b8b8b8"/><rect x="369.0" y="87.5" width="1.2" height="5" fill="#8c8c8c"/><rect x="372.2" y="81" width="1.1" height="11.5" fill="#c8c8c8"/><rect x="375.3" y="87.5" width="1.2" height="5" fill="#8c8c8c"/><rect x="378.4" y="87.5" width="1.2" height="5" fill="#b8b8b8"/><rect x="381.6" y="87.5" width="1.2" height="5" fill="#8c8c8c"/><rect x="384.7" y="87.5" width="1.2" height="5" fill="#b8b8b8"/><rect x="387.8" y="87.5" width="1.2" height="5" fill="#8c8c8c"/><rect x="391.0" y="87.5" width="1.2" height="5" fill="#b8b8b8"/><rect x="394.1" y="87.5" width="1.2" height="5" fill="#8c8c8c"/><rect x="397.3" y="87.5" width="1.2" height="5" fill="#b8b8b8"/><rect x="400.4" y="87.5" width="1.2" height="5" fill="#8c8c8c"/><rect x="403.7" y="81" width="1.1" height="11.5" fill="#c8c8c8"/><rect x="406.7" y="87.5" width="1.2" height="5" fill="#8c8c8c"/><rect x="409.8" y="87.5" width="1.2" height="5" fill="#b8b8b8"/><rect x="413.0" y="87.5" width="1.2" height="5" fill="#8c8c8c"/><rect x="416.1" y="87.5" width="1.2" height="5" fill="#b8b8b8"/><rect x="419.3" y="87.5" width="1.2" height="5" fill="#8c8c8c"/><rect x="422.4" y="87.5" width="1.2" height="5" fill="#b8b8b8"/><rect x="425.6" y="87.5" width="1.2" height="5" fill="#8c8c8c"/><rect x="428.7" y="87.5" width="1.2" height="5" fill="#b8b8b8"/><rect x="431.8" y="87.5" width="1.2" height="5" fill="#8c8c8c"/><rect x="435.1" y="81" width="1.1" height="11.5" fill="#c8c8c8"/><rect x="438.1" y="87.5" width="1.2" height="5" fill="#8c8c8c"/><rect x="441.3" y="87.5" width="1.2" height="5" fill="#b8b8b8"/><rect x="444.4" y="87.5" width="1.2" height="5" fill="#8c8c8c"/><rect x="447.5" y="87.5" width="1.2" height="5" fill="#b8b8b8"/><rect x="450.7" y="87.5" width="1.2" height="5" fill="#8c8c8c"/><rect x="453.8" y="87.5" width="1.2" height="5" fill="#b8b8b8"/><rect x="457.0" y="87.5" width="1.2" height="5" fill="#8c8c8c"/><rect x="460.1" y="87.5" width="1.2" height="5" fill="#b8b8b8"/><rect x="463.3" y="87.5" width="1.2" height="5" fill="#8c8c8c"/><rect x="466.5" y="81" width="1.1" height="11.5" fill="#c8c8c8"/><rect x="469.5" y="87.5" width="1.2" height="5" fill="#8c8c8c"/><rect x="472.7" y="87.5" width="1.2" height="5" fill="#b8b8b8"/><rect x="475.8" y="87.5" width="1.2" height="5" fill="#8c8c8c"/><rect x="479.0" y="87.5" width="1.2" height="5" fill="#b8b8b8"/><rect x="482.1" y="87.5" width="1.2" height="5" fill="#8c8c8c"/><rect x="485.3" y="87.5" width="1.2" height="5" fill="#b8b8b8"/><rect x="488.4" y="87.5" width="1.2" height="5" fill="#8c8c8c"/><rect x="491.5" y="87.5" width="1.2" height="5" fill="#b8b8b8"/><rect x="494.7" y="87.5" width="1.2" height="5" fill="#8c8c8c"/><rect x="497.9" y="81" width="1.1" height="11.5" fill="#c8c8c8"/><rect x="501.0" y="87.5" width="1.2" height="5" fill="#8c8c8c"/><rect x="504.1" y="87.5" width="1.2" height="5" fill="#b8b8b8"/><rect x="507.2" y="87.5" width="1.2" height="5" fill="#8c8c8c"/><rect x="510.4" y="87.5" width="1.2" height="5" fill="#b8b8b8"/><rect x="513.5" y="87.5" width="1.2" height="5" fill="#8c8c8c"/><rect x="516.7" y="87.5" width="1.2" height="5" fill="#b8b8b8"/><rect x="519.8" y="87.5" width="1.2" height="5" fill="#8c8c8c"/><rect x="523.0" y="87.5" width="1.2" height="5" fill="#b8b8b8"/><rect x="526.1" y="87.5" width="1.2" height="5" fill="#8c8c8c"/><rect x="529.3" y="81" width="1.1" height="11.5" fill="#c8c8c8"/><rect x="532.4" y="87.5" width="1.2" height="5" fill="#8c8c8c"/><rect x="535.5" y="87.5" width="1.2" height="5" fill="#b8b8b8"/><rect x="538.7" y="87.5" width="1.2" height="5" fill="#8c8c8c"/><rect x="541.8" y="87.5" width="1.2" height="5" fill="#b8b8b8"/><rect x="544.9" y="87.5" width="1.2" height="5" fill="#8c8c8c"/><rect x="548.1" y="87.5" width="1.2" height="5" fill="#b8b8b8"/><rect x="551.2" y="87.5" width="1.2" height="5" fill="#8c8c8c"/><rect x="554.4" y="87.5" width="1.2" height="5" fill="#b8b8b8"/><rect x="557.5" y="87.5" width="1.2" height="5" fill="#8c8c8c"/><rect x="560.8" y="81" width="1.1" height="11.5" fill="#c8c8c8"/><rect x="563.8" y="87.5" width="1.2" height="5" fill="#8c8c8c"/><rect x="566.9" y="87.5" width="1.2" height="5" fill="#b8b8b8"/><rect x="570.1" y="87.5" width="1.2" height="5" fill="#8c8c8c"/><rect x="573.2" y="87.5" width="1.2" height="5" fill="#b8b8b8"/><rect x="576.4" y="87.5" width="1.2" height="5" fill="#8c8c8c"/><rect x="579.5" y="87.5" width="1.2" height="5" fill="#b8b8b8"/><rect x="582.7" y="87.5" width="1.2" height="5" fill="#8c8c8c"/><rect x="585.8" y="87.5" width="1.2" height="5" fill="#b8b8b8"/><rect x="588.9" y="87.5" width="1.2" height="5" fill="#8c8c8c"/><rect x="592.2" y="81" width="1.1" height="11.5" fill="#c8c8c8"/><rect x="595.2" y="87.5" width="1.2" height="5" fill="#8c8c8c"/><rect x="598.4" y="87.5" width="1.2" height="5" fill="#b8b8b8"/><rect x="601.5" y="87.5" width="1.2" height="5" fill="#8c8c8c"/><rect x="604.6" y="87.5" width="1.2" height="5" fill="#b8b8b8"/><rect x="607.8" y="87.5" width="1.2" height="5" fill="#8c8c8c"/><rect x="610.9" y="87.5" width="1.2" height="5" fill="#b8b8b8"/><rect x="614.1" y="87.5" width="1.2" height="5" fill="#8c8c8c"/><rect x="617.2" y="87.5" width="1.2" height="5" fill="#b8b8b8"/><rect x="620.4" y="87.5" width="1.2" height="5" fill="#8c8c8c"/><rect x="623.6" y="81" width="1.1" height="11.5" fill="#c8c8c8"/><rect x="626.6" y="87.5" width="1.2" height="5" fill="#8c8c8c"/><rect x="629.8" y="87.5" width="1.2" height="5" fill="#b8b8b8"/><rect x="632.9" y="87.5" width="1.2" height="5" fill="#8c8c8c"/><rect x="636.1" y="87.5" width="1.2" height="5" fill="#b8b8b8"/><rect x="639.2" y="87.5" width="1.2" height="5" fill="#8c8c8c"/><rect x="642.4" y="87.5" width="1.2" height="5" fill="#b8b8b8"/><rect x="645.5" y="87.5" width="1.2" height="5" fill="#8c8c8c"/><rect x="648.6" y="87.5" width="1.2" height="5" fill="#b8b8b8"/><rect x="651.8" y="87.5" width="1.2" height="5" fill="#8c8c8c"/><rect x="655.0" y="81" width="1.1" height="11.5" fill="#c8c8c8"/><rect x="658.1" y="87.5" width="1.2" height="5" fill="#8c8c8c"/><rect x="661.2" y="87.5" width="1.2" height="5" fill="#b8b8b8"/><rect x="664.3" y="87.5" width="1.2" height="5" fill="#8c8c8c"/><rect x="667.5" y="87.5" width="1.2" height="5" fill="#b8b8b8"/><rect x="670.6" y="87.5" width="1.2" height="5" fill="#8c8c8c"/><rect x="673.8" y="87.5" width="1.2" height="5" fill="#b8b8b8"/><rect x="676.9" y="87.5" width="1.2" height="5" fill="#8c8c8c"/><rect x="680.1" y="87.5" width="1.2" height="5" fill="#b8b8b8"/><rect x="683.2" y="87.5" width="1.2" height="5" fill="#8c8c8c"/><rect x="686.4" y="81" width="1.1" height="11.5" fill="#c8c8c8"/><rect x="689.5" y="87.5" width="1.2" height="5" fill="#8c8c8c"/><rect x="692.6" y="87.5" width="1.2" height="5" fill="#b8b8b8"/><rect x="695.8" y="87.5" width="1.2" height="5" fill="#8c8c8c"/><rect x="698.9" y="87.5" width="1.2" height="5" fill="#b8b8b8"/><rect x="702.0" y="87.5" width="1.2" height="5" fill="#8c8c8c"/><rect x="705.2" y="87.5" width="1.2" height="5" fill="#b8b8b8"/><rect x="708.3" y="87.5" width="1.2" height="5" fill="#8c8c8c"/><rect x="711.5" y="87.5" width="1.2" height="5" fill="#b8b8b8"/><rect x="714.6" y="87.5" width="1.2" height="5" fill="#8c8c8c"/><rect x="717.9" y="81" width="1.1" height="11.5" fill="#c8c8c8"/><rect x="720.9" y="87.5" width="1.2" height="5" fill="#8c8c8c"/><rect x="724.0" y="87.5" width="1.2" height="5" fill="#b8b8b8"/><rect x="727.2" y="87.5" width="1.2" height="5" fill="#8c8c8c"/><rect x="730.3" y="87.5" width="1.2" height="5" fill="#b8b8b8"/><rect x="733.5" y="87.5" width="1.2" height="5" fill="#8c8c8c"/><rect x="736.6" y="87.5" width="1.2" height="5" fill="#b8b8b8"/><rect x="739.8" y="87.5" width="1.2" height="5" fill="#8c8c8c"/><rect x="742.9" y="87.5" width="1.2" height="5" fill="#b8b8b8"/><rect x="746.0" y="87.5" width="1.2" height="5" fill="#8c8c8c"/><rect x="749.3" y="81" width="1.1" height="11.5" fill="#c8c8c8"/><rect x="752.3" y="87.5" width="1.2" height="5" fill="#8c8c8c"/><rect x="755.5" y="87.5" width="1.2" height="5" fill="#b8b8b8"/><rect x="758.6" y="87.5" width="1.2" height="5" fill="#8c8c8c"/><rect x="761.7" y="87.5" width="1.2" height="5" fill="#b8b8b8"/><rect x="764.9" y="87.5" width="1.2" height="5" fill="#8c8c8c"/><rect x="768.0" y="87.5" width="1.2" height="5" fill="#b8b8b8"/><rect x="771.2" y="87.5" width="1.2" height="5" fill="#8c8c8c"/><rect x="774.3" y="87.5" width="1.2" height="5" fill="#b8b8b8"/><rect x="777.5" y="87.5" width="1.2" height="5" fill="#8c8c8c"/><rect x="780.7" y="81" width="1.1" height="11.5" fill="#c8c8c8"/><rect x="783.7" y="87.5" width="1.2" height="5" fill="#8c8c8c"/><rect x="786.9" y="87.5" width="1.2" height="5" fill="#b8b8b8"/><rect x="790.0" y="87.5" width="1.2" height="5" fill="#8c8c8c"/><rect x="793.2" y="87.5" width="1.2" height="5" fill="#b8b8b8"/><rect x="796.3" y="87.5" width="1.2" height="5" fill="#8c8c8c"/><rect x="799.5" y="87.5" width="1.2" height="5" fill="#b8b8b8"/><rect x="802.6" y="87.5" width="1.2" height="5" fill="#8c8c8c"/><rect x="805.7" y="87.5" width="1.2" height="5" fill="#b8b8b8"/><rect x="808.9" y="87.5" width="1.2" height="5" fill="#8c8c8c"/><rect x="812.1" y="81" width="1.1" height="11.5" fill="#c8c8c8"/><rect x="815.2" y="87.5" width="1.2" height="5" fill="#8c8c8c"/><rect x="818.3" y="87.5" width="1.2" height="5" fill="#b8b8b8"/><rect x="821.4" y="87.5" width="1.2" height="5" fill="#8c8c8c"/><rect x="824.6" y="87.5" width="1.2" height="5" fill="#b8b8b8"/><rect x="827.7" y="87.5" width="1.2" height="5" fill="#8c8c8c"/><rect x="830.9" y="87.5" width="1.2" height="5" fill="#b8b8b8"/><rect x="834.0" y="87.5" width="1.2" height="5" fill="#8c8c8c"/><rect x="837.2" y="87.5" width="1.2" height="5" fill="#b8b8b8"/><rect x="840.3" y="87.5" width="1.2" height="5" fill="#8c8c8c"/><rect x="843.5" y="81" width="1.1" height="11.5" fill="#c8c8c8"/><rect x="846.6" y="87.5" width="1.2" height="5" fill="#8c8c8c"/><rect x="849.7" y="87.5" width="1.2" height="5" fill="#b8b8b8"/><rect x="852.9" y="87.5" width="1.2" height="5" fill="#8c8c8c"/><rect x="856.0" y="87.5" width="1.2" height="5" fill="#b8b8b8"/><rect x="859.1" y="87.5" width="1.2" height="5" fill="#8c8c8c"/><rect x="862.3" y="87.5" width="1.2" height="5" fill="#b8b8b8"/><rect x="865.4" y="87.5" width="1.2" height="5" fill="#8c8c8c"/><rect x="868.6" y="87.5" width="1.2" height="5" fill="#b8b8b8"/><rect x="871.7" y="87.5" width="1.2" height="5" fill="#8c8c8c"/><rect x="875.0" y="81" width="1.1" height="11.5" fill="#c8c8c8"/><rect x="878.0" y="87.5" width="1.2" height="5" fill="#8c8c8c"/><rect x="881.1" y="87.5" width="1.2" height="5" fill="#b8b8b8"/><rect x="884.3" y="87.5" width="1.2" height="5" fill="#8c8c8c"/><rect x="887.4" y="87.5" width="1.2" height="5" fill="#b8b8b8"/><rect x="890.6" y="87.5" width="1.2" height="5" fill="#8c8c8c"/><rect x="893.7" y="87.5" width="1.2" height="5" fill="#b8b8b8"/><rect x="896.9" y="87.5" width="1.2" height="5" fill="#8c8c8c"/><rect x="900.0" y="87.5" width="1.2" height="5" fill="#b8b8b8"/><rect x="903.1" y="87.5" width="1.2" height="5" fill="#8c8c8c"/><rect x="906.4" y="81" width="1.1" height="11.5" fill="#c8c8c8"/><rect x="909.4" y="87.5" width="1.2" height="5" fill="#8c8c8c"/><rect x="912.6" y="87.5" width="1.2" height="5" fill="#b8b8b8"/><rect x="915.7" y="87.5" width="1.2" height="5" fill="#8c8c8c"/><rect x="918.8" y="87.5" width="1.2" height="5" fill="#b8b8b8"/><rect x="922.0" y="87.5" width="1.2" height="5" fill="#8c8c8c"/><rect x="925.1" y="87.5" width="1.2" height="5" fill="#b8b8b8"/><rect x="928.3" y="87.5" width="1.2" height="5" fill="#8c8c8c"/><rect x="931.4" y="87.5" width="1.2" height="5" fill="#b8b8b8"/><rect x="934.6" y="87.5" width="1.2" height="5" fill="#8c8c8c"/><rect x="937.8" y="81" width="1.1" height="11.5" fill="#c8c8c8"/><rect x="940.8" y="87.5" width="1.2" height="5" fill="#8c8c8c"/><rect x="944.0" y="87.5" width="1.2" height="5" fill="#b8b8b8"/><rect x="947.1" y="87.5" width="1.2" height="5" fill="#8c8c8c"/><rect x="950.3" y="87.5" width="1.2" height="5" fill="#b8b8b8"/><rect x="953.4" y="87.5" width="1.2" height="5" fill="#8c8c8c"/><rect x="956.6" y="87.5" width="1.2" height="5" fill="#b8b8b8"/><rect x="959.7" y="87.5" width="1.2" height="5" fill="#8c8c8c"/><rect x="962.8" y="87.5" width="1.2" height="5" fill="#b8b8b8"/><rect x="966.0" y="87.5" width="1.2" height="5" fill="#8c8c8c"/><rect x="969.2" y="81" width="1.1" height="11.5" fill="#c8c8c8"/><rect x="972.3" y="87.5" width="1.2" height="5" fill="#8c8c8c"/><rect x="975.4" y="87.5" width="1.2" height="5" fill="#b8b8b8"/><rect x="978.5" y="87.5" width="1.2" height="5" fill="#8c8c8c"/><rect x="981.7" y="87.5" width="1.2" height="5" fill="#b8b8b8"/><rect x="984.8" y="87.5" width="1.2" height="5" fill="#8c8c8c"/><rect x="988.0" y="87.5" width="1.2" height="5" fill="#b8b8b8"/><rect x="991.1" y="87.5" width="1.2" height="5" fill="#8c8c8c"/><rect x="994.3" y="87.5" width="1.2" height="5" fill="#b8b8b8"/><rect x="997.4" y="87.5" width="1.2" height="5" fill="#8c8c8c"/><rect x="1000.6" y="81" width="1.1" height="11.5" fill="#c8c8c8"/><rect x="1003.7" y="87.5" width="1.2" height="5" fill="#8c8c8c"/><rect x="1006.8" y="87.5" width="1.2" height="5" fill="#b8b8b8"/><rect x="1010.0" y="87.5" width="1.2" height="5" fill="#8c8c8c"/><rect x="1013.1" y="87.5" width="1.2" height="5" fill="#b8b8b8"/><rect x="1016.2" y="87.5" width="1.2" height="5" fill="#8c8c8c"/><rect x="1019.4" y="87.5" width="1.2" height="5" fill="#b8b8b8"/><rect x="1022.5" y="87.5" width="1.2" height="5" fill="#8c8c8c"/><rect x="1025.7" y="87.5" width="1.2" height="5" fill="#b8b8b8"/><rect x="1028.8" y="87.5" width="1.2" height="5" fill="#8c8c8c"/><rect x="1032.1" y="81" width="1.1" height="11.5" fill="#c8c8c8"/><rect x="1035.1" y="87.5" width="1.2" height="5" fill="#8c8c8c"/><rect x="1038.2" y="87.5" width="1.2" height="5" fill="#b8b8b8"/><rect x="1041.4" y="87.5" width="1.2" height="5" fill="#8c8c8c"/><rect x="1044.5" y="87.5" width="1.2" height="5" fill="#b8b8b8"/><rect x="1047.7" y="87.5" width="1.2" height="5" fill="#8c8c8c"/><rect x="1050.8" y="87.5" width="1.2" height="5" fill="#b8b8b8"/><rect x="1054.0" y="87.5" width="1.2" height="5" fill="#8c8c8c"/><rect x="1057.1" y="87.5" width="1.2" height="5" fill="#b8b8b8"/><rect x="1060.2" y="87.5" width="1.2" height="5" fill="#8c8c8c"/><rect x="1063.5" y="81" width="1.1" height="11.5" fill="#c8c8c8"/><rect x="1066.5" y="87.5" width="1.2" height="5" fill="#8c8c8c"/><rect x="1069.7" y="87.5" width="1.2" height="5" fill="#b8b8b8"/><rect x="1072.8" y="87.5" width="1.2" height="5" fill="#8c8c8c"/><rect x="1075.9" y="87.5" width="1.2" height="5" fill="#b8b8b8"/><rect x="1079.1" y="87.5" width="1.2" height="5" fill="#8c8c8c"/><rect x="1082.2" y="87.5" width="1.2" height="5" fill="#b8b8b8"/><rect x="1085.4" y="87.5" width="1.2" height="5" fill="#8c8c8c"/><rect x="1088.5" y="87.5" width="1.2" height="5" fill="#b8b8b8"/><rect x="1091.7" y="87.5" width="1.2" height="5" fill="#8c8c8c"/><rect x="1094.9" y="81" width="1.1" height="11.5" fill="#c8c8c8"/><rect x="1097.9" y="87.5" width="1.2" height="5" fill="#8c8c8c"/><rect x="1101.1" y="87.5" width="1.2" height="5" fill="#b8b8b8"/><rect x="1104.2" y="87.5" width="1.2" height="5" fill="#8c8c8c"/><rect x="1107.4" y="87.5" width="1.2" height="5" fill="#b8b8b8"/><rect x="1110.5" y="87.5" width="1.2" height="5" fill="#8c8c8c"/><rect x="1113.7" y="87.5" width="1.2" height="5" fill="#b8b8b8"/><rect x="1116.8" y="87.5" width="1.2" height="5" fill="#8c8c8c"/><rect x="1119.9" y="87.5" width="1.2" height="5" fill="#b8b8b8"/><rect x="1123.1" y="87.5" width="1.2" height="5" fill="#8c8c8c"/><rect x="1126.3" y="81" width="1.1" height="11.5" fill="#c8c8c8"/><rect x="1129.4" y="87.5" width="1.2" height="5" fill="#8c8c8c"/><rect x="1132.5" y="87.5" width="1.2" height="5" fill="#b8b8b8"/><rect x="1135.6" y="87.5" width="1.2" height="5" fill="#8c8c8c"/><rect x="1138.8" y="87.5" width="1.2" height="5" fill="#b8b8b8"/><rect x="1141.9" y="87.5" width="1.2" height="5" fill="#8c8c8c"/><rect x="1145.1" y="87.5" width="1.2" height="5" fill="#b8b8b8"/><rect x="1148.2" y="87.5" width="1.2" height="5" fill="#8c8c8c"/><rect x="1151.4" y="87.5" width="1.2" height="5" fill="#b8b8b8"/><rect x="1154.5" y="87.5" width="1.2" height="5" fill="#8c8c8c"/><rect x="1157.7" y="81" width="1.1" height="11.5" fill="#c8c8c8"/><rect x="1160.8" y="87.5" width="1.2" height="5" fill="#8c8c8c"/><rect x="1163.9" y="87.5" width="1.2" height="5" fill="#b8b8b8"/><rect x="1167.1" y="87.5" width="1.2" height="5" fill="#8c8c8c"/><rect x="1170.2" y="87.5" width="1.2" height="5" fill="#b8b8b8"/><rect x="1173.4" y="87.5" width="1.2" height="5" fill="#8c8c8c"/><rect x="1176.5" y="87.5" width="1.2" height="5" fill="#b8b8b8"/><rect x="1179.6" y="87.5" width="1.2" height="5" fill="#8c8c8c"/><rect x="1182.8" y="87.5" width="1.2" height="5" fill="#b8b8b8"/><rect x="1185.9" y="87.5" width="1.2" height="5" fill="#8c8c8c"/><rect x="1189.2" y="81" width="1.1" height="11.5" fill="#c8c8c8"/><rect x="1192.2" y="87.5" width="1.2" height="5" fill="#8c8c8c"/><rect x="1195.3" y="87.5" width="1.2" height="5" fill="#b8b8b8"/><rect x="1198.5" y="87.5" width="1.2" height="5" fill="#8c8c8c"/><rect x="1201.6" y="87.5" width="1.2" height="5" fill="#b8b8b8"/><rect x="1204.8" y="87.5" width="1.2" height="5" fill="#8c8c8c"/><rect x="1207.9" y="87.5" width="1.2" height="5" fill="#b8b8b8"/><rect x="1211.1" y="87.5" width="1.2" height="5" fill="#8c8c8c"/><rect x="1214.2" y="87.5" width="1.2" height="5" fill="#b8b8b8"/><rect x="1217.3" y="87.5" width="1.2" height="5" fill="#8c8c8c"/><rect x="1220.6" y="81" width="1.1" height="11.5" fill="#c8c8c8"/><rect x="1223.6" y="87.5" width="1.2" height="5" fill="#8c8c8c"/><rect x="1226.8" y="87.5" width="1.2" height="5" fill="#b8b8b8"/><rect x="1229.9" y="87.5" width="1.2" height="5" fill="#8c8c8c"/><rect x="1233.0" y="87.5" width="1.2" height="5" fill="#b8b8b8"/><rect x="1236.2" y="87.5" width="1.2" height="5" fill="#8c8c8c"/><rect x="1239.3" y="87.5" width="1.2" height="5" fill="#b8b8b8"/><rect x="1242.5" y="87.5" width="1.2" height="5" fill="#8c8c8c"/><rect x="1245.6" y="87.5" width="1.2" height="5" fill="#b8b8b8"/><rect x="1248.8" y="87.5" width="1.2" height="5" fill="#8c8c8c"/><rect x="1252.0" y="81" width="1.1" height="11.5" fill="#c8c8c8"/><rect x="1255.0" y="87.5" width="1.2" height="5" fill="#8c8c8c"/><rect x="1258.2" y="87.5" width="1.2" height="5" fill="#b8b8b8"/><rect x="1261.3" y="87.5" width="1.2" height="5" fill="#8c8c8c"/><rect x="1264.5" y="87.5" width="1.2" height="5" fill="#b8b8b8"/><rect x="1267.6" y="87.5" width="1.2" height="5" fill="#8c8c8c"/><rect x="1270.8" y="87.5" width="1.2" height="5" fill="#b8b8b8"/><rect x="1273.9" y="87.5" width="1.2" height="5" fill="#8c8c8c"/><rect x="1277.0" y="87.5" width="1.2" height="5" fill="#b8b8b8"/><rect x="1280.2" y="87.5" width="1.2" height="5" fill="#8c8c8c"/><rect x="1283.4" y="81" width="1.1" height="11.5" fill="#c8c8c8"/><rect x="1286.5" y="87.5" width="1.2" height="5" fill="#8c8c8c"/><rect x="1289.6" y="87.5" width="1.2" height="5" fill="#b8b8b8"/><rect x="1292.7" y="87.5" width="1.2" height="5" fill="#8c8c8c"/><rect x="1295.9" y="87.5" width="1.2" height="5" fill="#b8b8b8"/><rect x="1299.0" y="87.5" width="1.2" height="5" fill="#8c8c8c"/><rect x="1302.2" y="87.5" width="1.2" height="5" fill="#b8b8b8"/><rect x="1305.3" y="87.5" width="1.2" height="5" fill="#8c8c8c"/><rect x="1308.5" y="87.5" width="1.2" height="5" fill="#b8b8b8"/><rect x="1311.6" y="87.5" width="1.2" height="5" fill="#8c8c8c"/><rect x="1314.8" y="81" width="1.1" height="11.5" fill="#c8c8c8"/><rect x="1317.9" y="87.5" width="1.2" height="5" fill="#8c8c8c"/><rect x="1321.0" y="87.5" width="1.2" height="5" fill="#b8b8b8"/><rect x="1324.2" y="87.5" width="1.2" height="5" fill="#8c8c8c"/><rect x="1327.3" y="87.5" width="1.2" height="5" fill="#b8b8b8"/><rect x="1330.5" y="87.5" width="1.2" height="5" fill="#8c8c8c"/><rect x="1333.6" y="87.5" width="1.2" height="5" fill="#b8b8b8"/><rect x="1336.7" y="87.5" width="1.2" height="5" fill="#8c8c8c"/><rect x="1339.9" y="87.5" width="1.2" height="5" fill="#b8b8b8"/><rect x="1343.0" y="87.5" width="1.2" height="5" fill="#8c8c8c"/><rect x="1346.3" y="81" width="1.1" height="11.5" fill="#c8c8c8"/><rect x="1349.3" y="87.5" width="1.2" height="5" fill="#8c8c8c"/><rect x="1352.4" y="87.5" width="1.2" height="5" fill="#b8b8b8"/><defs><clipPath id="hrc"><rect x="0" y="78" width="1355.5" height="15"/></clipPath></defs><g clip-path="url(#hrc)"><text x="59.1" y="88.6" font-family="Liberation Sans" font-weight="bold" font-size="9.6" fill="#f4f4f4" stroke="#1a1a1a" stroke-width="1.4" paint-order="stroke">-520</text><text x="90.6" y="88.6" font-family="Liberation Sans" font-weight="bold" font-size="9.6" fill="#f4f4f4" stroke="#1a1a1a" stroke-width="1.4" paint-order="stroke">-480</text><text x="122.0" y="88.6" font-family="Liberation Sans" font-weight="bold" font-size="9.6" fill="#f4f4f4" stroke="#1a1a1a" stroke-width="1.4" paint-order="stroke">-440</text><text x="153.4" y="88.6" font-family="Liberation Sans" font-weight="bold" font-size="9.6" fill="#f4f4f4" stroke="#1a1a1a" stroke-width="1.4" paint-order="stroke">-400</text><text x="184.8" y="88.6" font-family="Liberation Sans" font-weight="bold" font-size="9.6" fill="#f4f4f4" stroke="#1a1a1a" stroke-width="1.4" paint-order="stroke">-360</text><text x="216.2" y="88.6" font-family="Liberation Sans" font-weight="bold" font-size="9.6" fill="#f4f4f4" stroke="#1a1a1a" stroke-width="1.4" paint-order="stroke">-320</text><text x="247.7" y="88.6" font-family="Liberation Sans" font-weight="bold" font-size="9.6" fill="#f4f4f4" stroke="#1a1a1a" stroke-width="1.4" paint-order="stroke">-280</text><text x="279.1" y="88.6" font-family="Liberation Sans" font-weight="bold" font-size="9.6" fill="#f4f4f4" stroke="#1a1a1a" stroke-width="1.4" paint-order="stroke">-240</text><text x="310.5" y="88.6" font-family="Liberation Sans" font-weight="bold" font-size="9.6" fill="#f4f4f4" stroke="#1a1a1a" stroke-width="1.4" paint-order="stroke">-200</text><text x="341.9" y="88.6" font-family="Liberation Sans" font-weight="bold" font-size="9.6" fill="#f4f4f4" stroke="#1a1a1a" stroke-width="1.4" paint-order="stroke">-160</text><text x="373.3" y="88.6" font-family="Liberation Sans" font-weight="bold" font-size="9.6" fill="#f4f4f4" stroke="#1a1a1a" stroke-width="1.4" paint-order="stroke">-120</text><text x="404.8" y="88.6" font-family="Liberation Sans" font-weight="bold" font-size="9.6" fill="#f4f4f4" stroke="#1a1a1a" stroke-width="1.4" paint-order="stroke">-80</text><text x="436.2" y="88.6" font-family="Liberation Sans" font-weight="bold" font-size="9.6" fill="#f4f4f4" stroke="#1a1a1a" stroke-width="1.4" paint-order="stroke">-40</text><text x="467.6" y="88.6" font-family="Liberation Sans" font-weight="bold" font-size="9.6" fill="#f4f4f4" stroke="#1a1a1a" stroke-width="1.4" paint-order="stroke">0</text><text x="499.0" y="88.6" font-family="Liberation Sans" font-weight="bold" font-size="9.6" fill="#f4f4f4" stroke="#1a1a1a" stroke-width="1.4" paint-order="stroke">40</text><text x="530.4" y="88.6" font-family="Liberation Sans" font-weight="bold" font-size="9.6" fill="#f4f4f4" stroke="#1a1a1a" stroke-width="1.4" paint-order="stroke">80</text><text x="561.9" y="88.6" font-family="Liberation Sans" font-weight="bold" font-size="9.6" fill="#f4f4f4" stroke="#1a1a1a" stroke-width="1.4" paint-order="stroke">120</text><text x="593.3" y="88.6" font-family="Liberation Sans" font-weight="bold" font-size="9.6" fill="#f4f4f4" stroke="#1a1a1a" stroke-width="1.4" paint-order="stroke">160</text><text x="624.7" y="88.6" font-family="Liberation Sans" font-weight="bold" font-size="9.6" fill="#f4f4f4" stroke="#1a1a1a" stroke-width="1.4" paint-order="stroke">200</text><text x="656.1" y="88.6" font-family="Liberation Sans" font-weight="bold" font-size="9.6" fill="#f4f4f4" stroke="#1a1a1a" stroke-width="1.4" paint-order="stroke">240</text><text x="687.5" y="88.6" font-family="Liberation Sans" font-weight="bold" font-size="9.6" fill="#f4f4f4" stroke="#1a1a1a" stroke-width="1.4" paint-order="stroke">280</text><text x="719.0" y="88.6" font-family="Liberation Sans" font-weight="bold" font-size="9.6" fill="#f4f4f4" stroke="#1a1a1a" stroke-width="1.4" paint-order="stroke">320</text><text x="750.4" y="88.6" font-family="Liberation Sans" font-weight="bold" font-size="9.6" fill="#f4f4f4" stroke="#1a1a1a" stroke-width="1.4" paint-order="stroke">360</text><text x="781.8" y="88.6" font-family="Liberation Sans" font-weight="bold" font-size="9.6" fill="#f4f4f4" stroke="#1a1a1a" stroke-width="1.4" paint-order="stroke">400</text><text x="813.2" y="88.6" font-family="Liberation Sans" font-weight="bold" font-size="9.6" fill="#f4f4f4" stroke="#1a1a1a" stroke-width="1.4" paint-order="stroke">440</text><text x="844.6" y="88.6" font-family="Liberation Sans" font-weight="bold" font-size="9.6" fill="#f4f4f4" stroke="#1a1a1a" stroke-width="1.4" paint-order="stroke">480</text><text x="876.1" y="88.6" font-family="Liberation Sans" font-weight="bold" font-size="9.6" fill="#f4f4f4" stroke="#1a1a1a" stroke-width="1.4" paint-order="stroke">520</text><text x="907.5" y="88.6" font-family="Liberation Sans" font-weight="bold" font-size="9.6" fill="#f4f4f4" stroke="#1a1a1a" stroke-width="1.4" paint-order="stroke">560</text><text x="938.9" y="88.6" font-family="Liberation Sans" font-weight="bold" font-size="9.6" fill="#f4f4f4" stroke="#1a1a1a" stroke-width="1.4" paint-order="stroke">600</text><text x="970.3" y="88.6" font-family="Liberation Sans" font-weight="bold" font-size="9.6" fill="#f4f4f4" stroke="#1a1a1a" stroke-width="1.4" paint-order="stroke">640</text><text x="1001.7" y="88.6" font-family="Liberation Sans" font-weight="bold" font-size="9.6" fill="#f4f4f4" stroke="#1a1a1a" stroke-width="1.4" paint-order="stroke">680</text><text x="1033.2" y="88.6" font-family="Liberation Sans" font-weight="bold" font-size="9.6" fill="#f4f4f4" stroke="#1a1a1a" stroke-width="1.4" paint-order="stroke">720</text><text x="1064.6" y="88.6" font-family="Liberation Sans" font-weight="bold" font-size="9.6" fill="#f4f4f4" stroke="#1a1a1a" stroke-width="1.4" paint-order="stroke">760</text><text x="1096.0" y="88.6" font-family="Liberation Sans" font-weight="bold" font-size="9.6" fill="#f4f4f4" stroke="#1a1a1a" stroke-width="1.4" paint-order="stroke">800</text><text x="1127.4" y="88.6" font-family="Liberation Sans" font-weight="bold" font-size="9.6" fill="#f4f4f4" stroke="#1a1a1a" stroke-width="1.4" paint-order="stroke">840</text><text x="1158.8" y="88.6" font-family="Liberation Sans" font-weight="bold" font-size="9.6" fill="#f4f4f4" stroke="#1a1a1a" stroke-width="1.4" paint-order="stroke">880</text><text x="1190.3" y="88.6" font-family="Liberation Sans" font-weight="bold" font-size="9.6" fill="#f4f4f4" stroke="#1a1a1a" stroke-width="1.4" paint-order="stroke">920</text><text x="1221.7" y="88.6" font-family="Liberation Sans" font-weight="bold" font-size="9.6" fill="#f4f4f4" stroke="#1a1a1a" stroke-width="1.4" paint-order="stroke">960</text><text x="1253.1" y="88.6" font-family="Liberation Sans" font-weight="bold" font-size="9.6" fill="#f4f4f4" stroke="#1a1a1a" stroke-width="1.4" paint-order="stroke">1000</text><text x="1284.5" y="88.6" font-family="Liberation Sans" font-weight="bold" font-size="9.6" fill="#f4f4f4" stroke="#1a1a1a" stroke-width="1.4" paint-order="stroke">1040</text><text x="1315.9" y="88.6" font-family="Liberation Sans" font-weight="bold" font-size="9.6" fill="#f4f4f4" stroke="#1a1a1a" stroke-width="1.4" paint-order="stroke">1080</text><text x="1347.4" y="88.6" font-family="Liberation Sans" font-weight="bold" font-size="9.6" fill="#f4f4f4" stroke="#1a1a1a" stroke-width="1.4" paint-order="stroke">1120</text></g><text x="43" y="88.6" font-family="Liberation Sans" font-weight="bold" font-size="9.6" fill="#f4f4f4" stroke="#1a1a1a" stroke-width="1.4" paint-order="stroke">0</text></svg>
<div class="a" style="left:272px;top:79px;width:1px;height:13px;background:#ededed;"></div>
<svg class="a" style="left:28px;top:79px;opacity:1" width="13" height="13" viewBox="0 0 13 13"><path d="M6.5 1 V12 M1 6.5 H12" stroke="#bbb" stroke-width="1" stroke-dasharray="1.2 1.2"/></svg>
<svg class="a" style="left:1356px;top:80.5px;opacity:1" width="12" height="10" viewBox="0 0 12 10"><path d="M2 7.5 L6 3.5 L10 7.5" stroke="#e6e6e6" stroke-width="1.3" fill="none"/></svg>
<svg class="a" style="left:27px;top:93px" width="14" height="718" viewBox="27 93 14 718"><rect x="36" y="94.5" width="5" height="1.2" fill="#b8b8b8"/><rect x="36" y="97.7" width="5" height="1.2" fill="#8c8c8c"/><rect x="36" y="100.8" width="5" height="1.2" fill="#b8b8b8"/><rect x="36" y="104.0" width="5" height="1.2" fill="#8c8c8c"/><rect x="36" y="107.1" width="5" height="1.2" fill="#b8b8b8"/><rect x="36" y="110.3" width="5" height="1.2" fill="#8c8c8c"/><rect x="29" y="113.5" width="12" height="1.1" fill="#c8c8c8"/><rect x="36" y="116.5" width="5" height="1.2" fill="#8c8c8c"/><rect x="36" y="119.7" width="5" height="1.2" fill="#b8b8b8"/><rect x="36" y="122.8" width="5" height="1.2" fill="#8c8c8c"/><rect x="36" y="126.0" width="5" height="1.2" fill="#b8b8b8"/><rect x="36" y="129.1" width="5" height="1.2" fill="#8c8c8c"/><rect x="36" y="132.3" width="5" height="1.2" fill="#b8b8b8"/><rect x="36" y="135.4" width="5" height="1.2" fill="#8c8c8c"/><rect x="36" y="138.5" width="5" height="1.2" fill="#b8b8b8"/><rect x="36" y="141.7" width="5" height="1.2" fill="#8c8c8c"/><rect x="29" y="144.9" width="12" height="1.1" fill="#c8c8c8"/><rect x="36" y="148.0" width="5" height="1.2" fill="#8c8c8c"/><rect x="36" y="151.1" width="5" height="1.2" fill="#b8b8b8"/><rect x="36" y="154.2" width="5" height="1.2" fill="#8c8c8c"/><rect x="36" y="157.4" width="5" height="1.2" fill="#b8b8b8"/><rect x="36" y="160.5" width="5" height="1.2" fill="#8c8c8c"/><rect x="36" y="163.7" width="5" height="1.2" fill="#b8b8b8"/><rect x="36" y="166.8" width="5" height="1.2" fill="#8c8c8c"/><rect x="36" y="170.0" width="5" height="1.2" fill="#b8b8b8"/><rect x="36" y="173.1" width="5" height="1.2" fill="#8c8c8c"/><rect x="29" y="176.3" width="12" height="1.1" fill="#c8c8c8"/><rect x="36" y="179.4" width="5" height="1.2" fill="#8c8c8c"/><rect x="36" y="182.5" width="5" height="1.2" fill="#b8b8b8"/><rect x="36" y="185.7" width="5" height="1.2" fill="#8c8c8c"/><rect x="36" y="188.8" width="5" height="1.2" fill="#b8b8b8"/><rect x="36" y="192.0" width="5" height="1.2" fill="#8c8c8c"/><rect x="36" y="195.1" width="5" height="1.2" fill="#b8b8b8"/><rect x="36" y="198.2" width="5" height="1.2" fill="#8c8c8c"/><rect x="36" y="201.4" width="5" height="1.2" fill="#b8b8b8"/><rect x="36" y="204.5" width="5" height="1.2" fill="#8c8c8c"/><rect x="29" y="207.8" width="12" height="1.1" fill="#c8c8c8"/><rect x="36" y="210.8" width="5" height="1.2" fill="#8c8c8c"/><rect x="36" y="213.9" width="5" height="1.2" fill="#b8b8b8"/><rect x="36" y="217.1" width="5" height="1.2" fill="#8c8c8c"/><rect x="36" y="220.2" width="5" height="1.2" fill="#b8b8b8"/><rect x="36" y="223.4" width="5" height="1.2" fill="#8c8c8c"/><rect x="36" y="226.5" width="5" height="1.2" fill="#b8b8b8"/><rect x="36" y="229.7" width="5" height="1.2" fill="#8c8c8c"/><rect x="36" y="232.8" width="5" height="1.2" fill="#b8b8b8"/><rect x="36" y="235.9" width="5" height="1.2" fill="#8c8c8c"/><rect x="29" y="239.2" width="12" height="1.1" fill="#c8c8c8"/><rect x="36" y="242.2" width="5" height="1.2" fill="#8c8c8c"/><rect x="36" y="245.4" width="5" height="1.2" fill="#b8b8b8"/><rect x="36" y="248.5" width="5" height="1.2" fill="#8c8c8c"/><rect x="36" y="251.6" width="5" height="1.2" fill="#b8b8b8"/><rect x="36" y="254.8" width="5" height="1.2" fill="#8c8c8c"/><rect x="36" y="257.9" width="5" height="1.2" fill="#b8b8b8"/><rect x="36" y="261.1" width="5" height="1.2" fill="#8c8c8c"/><rect x="36" y="264.2" width="5" height="1.2" fill="#b8b8b8"/><rect x="36" y="267.4" width="5" height="1.2" fill="#8c8c8c"/><rect x="29" y="270.6" width="12" height="1.1" fill="#c8c8c8"/><rect x="36" y="273.6" width="5" height="1.2" fill="#8c8c8c"/><rect x="36" y="276.8" width="5" height="1.2" fill="#b8b8b8"/><rect x="36" y="279.9" width="5" height="1.2" fill="#8c8c8c"/><rect x="36" y="283.1" width="5" height="1.2" fill="#b8b8b8"/><rect x="36" y="286.2" width="5" height="1.2" fill="#8c8c8c"/><rect x="36" y="289.4" width="5" height="1.2" fill="#b8b8b8"/><rect x="36" y="292.5" width="5" height="1.2" fill="#8c8c8c"/><rect x="36" y="295.6" width="5" height="1.2" fill="#b8b8b8"/><rect x="36" y="298.8" width="5" height="1.2" fill="#8c8c8c"/><rect x="29" y="302.0" width="12" height="1.1" fill="#c8c8c8"/><rect x="36" y="305.1" width="5" height="1.2" fill="#8c8c8c"/><rect x="36" y="308.2" width="5" height="1.2" fill="#b8b8b8"/><rect x="36" y="311.3" width="5" height="1.2" fill="#8c8c8c"/><rect x="36" y="314.5" width="5" height="1.2" fill="#b8b8b8"/><rect x="36" y="317.6" width="5" height="1.2" fill="#8c8c8c"/><rect x="36" y="320.8" width="5" height="1.2" fill="#b8b8b8"/><rect x="36" y="323.9" width="5" height="1.2" fill="#8c8c8c"/><rect x="36" y="327.1" width="5" height="1.2" fill="#b8b8b8"/><rect x="36" y="330.2" width="5" height="1.2" fill="#8c8c8c"/><rect x="29" y="333.4" width="12" height="1.1" fill="#c8c8c8"/><rect x="36" y="336.5" width="5" height="1.2" fill="#8c8c8c"/><rect x="36" y="339.6" width="5" height="1.2" fill="#b8b8b8"/><rect x="36" y="342.8" width="5" height="1.2" fill="#8c8c8c"/><rect x="36" y="345.9" width="5" height="1.2" fill="#b8b8b8"/><rect x="36" y="349.0" width="5" height="1.2" fill="#8c8c8c"/><rect x="36" y="352.2" width="5" height="1.2" fill="#b8b8b8"/><rect x="36" y="355.3" width="5" height="1.2" fill="#8c8c8c"/><rect x="36" y="358.5" width="5" height="1.2" fill="#b8b8b8"/><rect x="36" y="361.6" width="5" height="1.2" fill="#8c8c8c"/><rect x="29" y="364.9" width="12" height="1.1" fill="#c8c8c8"/><rect x="36" y="367.9" width="5" height="1.2" fill="#8c8c8c"/><rect x="36" y="371.0" width="5" height="1.2" fill="#b8b8b8"/><rect x="36" y="374.2" width="5" height="1.2" fill="#8c8c8c"/><rect x="36" y="377.3" width="5" height="1.2" fill="#b8b8b8"/><rect x="36" y="380.5" width="5" height="1.2" fill="#8c8c8c"/><rect x="36" y="383.6" width="5" height="1.2" fill="#b8b8b8"/><rect x="36" y="386.8" width="5" height="1.2" fill="#8c8c8c"/><rect x="36" y="389.9" width="5" height="1.2" fill="#b8b8b8"/><rect x="36" y="393.0" width="5" height="1.2" fill="#8c8c8c"/><rect x="29" y="396.3" width="12" height="1.1" fill="#c8c8c8"/><rect x="36" y="399.3" width="5" height="1.2" fill="#8c8c8c"/><rect x="36" y="402.5" width="5" height="1.2" fill="#b8b8b8"/><rect x="36" y="405.6" width="5" height="1.2" fill="#8c8c8c"/><rect x="36" y="408.7" width="5" height="1.2" fill="#b8b8b8"/><rect x="36" y="411.9" width="5" height="1.2" fill="#8c8c8c"/><rect x="36" y="415.0" width="5" height="1.2" fill="#b8b8b8"/><rect x="36" y="418.2" width="5" height="1.2" fill="#8c8c8c"/><rect x="36" y="421.3" width="5" height="1.2" fill="#b8b8b8"/><rect x="36" y="424.5" width="5" height="1.2" fill="#8c8c8c"/><rect x="29" y="427.7" width="12" height="1.1" fill="#c8c8c8"/><rect x="36" y="430.7" width="5" height="1.2" fill="#8c8c8c"/><rect x="36" y="433.9" width="5" height="1.2" fill="#b8b8b8"/><rect x="36" y="437.0" width="5" height="1.2" fill="#8c8c8c"/><rect x="36" y="440.2" width="5" height="1.2" fill="#b8b8b8"/><rect x="36" y="443.3" width="5" height="1.2" fill="#8c8c8c"/><rect x="36" y="446.5" width="5" height="1.2" fill="#b8b8b8"/><rect x="36" y="449.6" width="5" height="1.2" fill="#8c8c8c"/><rect x="36" y="452.7" width="5" height="1.2" fill="#b8b8b8"/><rect x="36" y="455.9" width="5" height="1.2" fill="#8c8c8c"/><rect x="29" y="459.1" width="12" height="1.1" fill="#c8c8c8"/><rect x="36" y="462.2" width="5" height="1.2" fill="#8c8c8c"/><rect x="36" y="465.3" width="5" height="1.2" fill="#b8b8b8"/><rect x="36" y="468.4" width="5" height="1.2" fill="#8c8c8c"/><rect x="36" y="471.6" width="5" height="1.2" fill="#b8b8b8"/><rect x="36" y="474.7" width="5" height="1.2" fill="#8c8c8c"/><rect x="36" y="477.9" width="5" height="1.2" fill="#b8b8b8"/><rect x="36" y="481.0" width="5" height="1.2" fill="#8c8c8c"/><rect x="36" y="484.2" width="5" height="1.2" fill="#b8b8b8"/><rect x="36" y="487.3" width="5" height="1.2" fill="#8c8c8c"/><rect x="29" y="490.5" width="12" height="1.1" fill="#c8c8c8"/><rect x="36" y="493.6" width="5" height="1.2" fill="#8c8c8c"/><rect x="36" y="496.7" width="5" height="1.2" fill="#b8b8b8"/><rect x="36" y="499.9" width="5" height="1.2" fill="#8c8c8c"/><rect x="36" y="503.0" width="5" height="1.2" fill="#b8b8b8"/><rect x="36" y="506.1" width="5" height="1.2" fill="#8c8c8c"/><rect x="36" y="509.3" width="5" height="1.2" fill="#b8b8b8"/><rect x="36" y="512.4" width="5" height="1.2" fill="#8c8c8c"/><rect x="36" y="515.6" width="5" height="1.2" fill="#b8b8b8"/><rect x="36" y="518.7" width="5" height="1.2" fill="#8c8c8c"/><rect x="29" y="522.0" width="12" height="1.1" fill="#c8c8c8"/><rect x="36" y="525.0" width="5" height="1.2" fill="#8c8c8c"/><rect x="36" y="528.1" width="5" height="1.2" fill="#b8b8b8"/><rect x="36" y="531.3" width="5" height="1.2" fill="#8c8c8c"/><rect x="36" y="534.4" width="5" height="1.2" fill="#b8b8b8"/><rect x="36" y="537.6" width="5" height="1.2" fill="#8c8c8c"/><rect x="36" y="540.7" width="5" height="1.2" fill="#b8b8b8"/><rect x="36" y="543.9" width="5" height="1.2" fill="#8c8c8c"/><rect x="36" y="547.0" width="5" height="1.2" fill="#b8b8b8"/><rect x="36" y="550.1" width="5" height="1.2" fill="#8c8c8c"/><rect x="29" y="553.4" width="12" height="1.1" fill="#c8c8c8"/><rect x="36" y="556.4" width="5" height="1.2" fill="#8c8c8c"/><rect x="36" y="559.6" width="5" height="1.2" fill="#b8b8b8"/><rect x="36" y="562.7" width="5" height="1.2" fill="#8c8c8c"/><rect x="36" y="565.8" width="5" height="1.2" fill="#b8b8b8"/><rect x="36" y="569.0" width="5" height="1.2" fill="#8c8c8c"/><rect x="36" y="572.1" width="5" height="1.2" fill="#b8b8b8"/><rect x="36" y="575.3" width="5" height="1.2" fill="#8c8c8c"/><rect x="36" y="578.4" width="5" height="1.2" fill="#b8b8b8"/><rect x="36" y="581.6" width="5" height="1.2" fill="#8c8c8c"/><rect x="29" y="584.8" width="12" height="1.1" fill="#c8c8c8"/><rect x="36" y="587.8" width="5" height="1.2" fill="#8c8c8c"/><rect x="36" y="591.0" width="5" height="1.2" fill="#b8b8b8"/><rect x="36" y="594.1" width="5" height="1.2" fill="#8c8c8c"/><rect x="36" y="597.3" width="5" height="1.2" fill="#b8b8b8"/><rect x="36" y="600.4" width="5" height="1.2" fill="#8c8c8c"/><rect x="36" y="603.6" width="5" height="1.2" fill="#b8b8b8"/><rect x="36" y="606.7" width="5" height="1.2" fill="#8c8c8c"/><rect x="36" y="609.8" width="5" height="1.2" fill="#b8b8b8"/><rect x="36" y="613.0" width="5" height="1.2" fill="#8c8c8c"/><rect x="29" y="616.2" width="12" height="1.1" fill="#c8c8c8"/><rect x="36" y="619.3" width="5" height="1.2" fill="#8c8c8c"/><rect x="36" y="622.4" width="5" height="1.2" fill="#b8b8b8"/><rect x="36" y="625.5" width="5" height="1.2" fill="#8c8c8c"/><rect x="36" y="628.7" width="5" height="1.2" fill="#b8b8b8"/><rect x="36" y="631.8" width="5" height="1.2" fill="#8c8c8c"/><rect x="36" y="635.0" width="5" height="1.2" fill="#b8b8b8"/><rect x="36" y="638.1" width="5" height="1.2" fill="#8c8c8c"/><rect x="36" y="641.3" width="5" height="1.2" fill="#b8b8b8"/><rect x="36" y="644.4" width="5" height="1.2" fill="#8c8c8c"/><rect x="29" y="647.6" width="12" height="1.1" fill="#c8c8c8"/><rect x="36" y="650.7" width="5" height="1.2" fill="#8c8c8c"/><rect x="36" y="653.8" width="5" height="1.2" fill="#b8b8b8"/><rect x="36" y="657.0" width="5" height="1.2" fill="#8c8c8c"/><rect x="36" y="660.1" width="5" height="1.2" fill="#b8b8b8"/><rect x="36" y="663.2" width="5" height="1.2" fill="#8c8c8c"/><rect x="36" y="666.4" width="5" height="1.2" fill="#b8b8b8"/><rect x="36" y="669.5" width="5" height="1.2" fill="#8c8c8c"/><rect x="36" y="672.7" width="5" height="1.2" fill="#b8b8b8"/><rect x="36" y="675.8" width="5" height="1.2" fill="#8c8c8c"/><rect x="29" y="679.1" width="12" height="1.1" fill="#c8c8c8"/><rect x="36" y="682.1" width="5" height="1.2" fill="#8c8c8c"/><rect x="36" y="685.2" width="5" height="1.2" fill="#b8b8b8"/><rect x="36" y="688.4" width="5" height="1.2" fill="#8c8c8c"/><rect x="36" y="691.5" width="5" height="1.2" fill="#b8b8b8"/><rect x="36" y="694.7" width="5" height="1.2" fill="#8c8c8c"/><rect x="36" y="697.8" width="5" height="1.2" fill="#b8b8b8"/><rect x="36" y="701.0" width="5" height="1.2" fill="#8c8c8c"/><rect x="36" y="704.1" width="5" height="1.2" fill="#b8b8b8"/><rect x="36" y="707.2" width="5" height="1.2" fill="#8c8c8c"/><rect x="29" y="710.5" width="12" height="1.1" fill="#c8c8c8"/><rect x="36" y="713.5" width="5" height="1.2" fill="#8c8c8c"/><rect x="36" y="716.7" width="5" height="1.2" fill="#b8b8b8"/><rect x="36" y="719.8" width="5" height="1.2" fill="#8c8c8c"/><rect x="36" y="722.9" width="5" height="1.2" fill="#b8b8b8"/><rect x="36" y="726.1" width="5" height="1.2" fill="#8c8c8c"/><rect x="36" y="729.2" width="5" height="1.2" fill="#b8b8b8"/><rect x="36" y="732.4" width="5" height="1.2" fill="#8c8c8c"/><rect x="36" y="735.5" width="5" height="1.2" fill="#b8b8b8"/><rect x="36" y="738.7" width="5" height="1.2" fill="#8c8c8c"/><rect x="29" y="741.9" width="12" height="1.1" fill="#c8c8c8"/><rect x="36" y="744.9" width="5" height="1.2" fill="#8c8c8c"/><rect x="36" y="748.1" width="5" height="1.2" fill="#b8b8b8"/><rect x="36" y="751.2" width="5" height="1.2" fill="#8c8c8c"/><rect x="36" y="754.4" width="5" height="1.2" fill="#b8b8b8"/><rect x="36" y="757.5" width="5" height="1.2" fill="#8c8c8c"/><rect x="36" y="760.7" width="5" height="1.2" fill="#b8b8b8"/><rect x="36" y="763.8" width="5" height="1.2" fill="#8c8c8c"/><rect x="36" y="766.9" width="5" height="1.2" fill="#b8b8b8"/><rect x="36" y="770.1" width="5" height="1.2" fill="#8c8c8c"/><rect x="29" y="773.3" width="12" height="1.1" fill="#c8c8c8"/><rect x="36" y="776.4" width="5" height="1.2" fill="#8c8c8c"/><rect x="36" y="779.5" width="5" height="1.2" fill="#b8b8b8"/><rect x="36" y="782.6" width="5" height="1.2" fill="#8c8c8c"/><rect x="36" y="785.8" width="5" height="1.2" fill="#b8b8b8"/><rect x="36" y="788.9" width="5" height="1.2" fill="#8c8c8c"/><rect x="36" y="792.1" width="5" height="1.2" fill="#b8b8b8"/><rect x="36" y="795.2" width="5" height="1.2" fill="#8c8c8c"/><rect x="36" y="798.4" width="5" height="1.2" fill="#b8b8b8"/><rect x="36" y="801.5" width="5" height="1.2" fill="#8c8c8c"/><rect x="29" y="804.7" width="12" height="1.1" fill="#c8c8c8"/><rect x="36" y="807.8" width="5" height="1.2" fill="#8c8c8c"/><text x="0" y="0" font-family="Liberation Sans" font-weight="bold" font-size="9.6" fill="#f4f4f4" stroke="#1a1a1a" stroke-width="1.4" paint-order="stroke" transform="translate(36.2 115.6) rotate(-90)">0</text><text x="0" y="0" font-family="Liberation Sans" font-weight="bold" font-size="9.6" fill="#f4f4f4" stroke="#1a1a1a" stroke-width="1.4" paint-order="stroke" transform="translate(36.2 147.0) rotate(-90)">40</text><text x="0" y="0" font-family="Liberation Sans" font-weight="bold" font-size="9.6" fill="#f4f4f4" stroke="#1a1a1a" stroke-width="1.4" paint-order="stroke" transform="translate(36.2 178.4) rotate(-90)">80</text><text x="0" y="0" font-family="Liberation Sans" font-weight="bold" font-size="9.6" fill="#f4f4f4" stroke="#1a1a1a" stroke-width="1.4" paint-order="stroke" transform="translate(36.2 209.9) rotate(-90)">120</text><text x="0" y="0" font-family="Liberation Sans" font-weight="bold" font-size="9.6" fill="#f4f4f4" stroke="#1a1a1a" stroke-width="1.4" paint-order="stroke" transform="translate(36.2 241.3) rotate(-90)">160</text><text x="0" y="0" font-family="Liberation Sans" font-weight="bold" font-size="9.6" fill="#f4f4f4" stroke="#1a1a1a" stroke-width="1.4" paint-order="stroke" transform="translate(36.2 272.7) rotate(-90)">200</text><text x="0" y="0" font-family="Liberation Sans" font-weight="bold" font-size="9.6" fill="#f4f4f4" stroke="#1a1a1a" stroke-width="1.4" paint-order="stroke" transform="translate(36.2 304.1) rotate(-90)">240</text><text x="0" y="0" font-family="Liberation Sans" font-weight="bold" font-size="9.6" fill="#f4f4f4" stroke="#1a1a1a" stroke-width="1.4" paint-order="stroke" transform="translate(36.2 335.5) rotate(-90)">280</text><text x="0" y="0" font-family="Liberation Sans" font-weight="bold" font-size="9.6" fill="#f4f4f4" stroke="#1a1a1a" stroke-width="1.4" paint-order="stroke" transform="translate(36.2 367.0) rotate(-90)">320</text><text x="0" y="0" font-family="Liberation Sans" font-weight="bold" font-size="9.6" fill="#f4f4f4" stroke="#1a1a1a" stroke-width="1.4" paint-order="stroke" transform="translate(36.2 398.4) rotate(-90)">360</text><text x="0" y="0" font-family="Liberation Sans" font-weight="bold" font-size="9.6" fill="#f4f4f4" stroke="#1a1a1a" stroke-width="1.4" paint-order="stroke" transform="translate(36.2 429.8) rotate(-90)">400</text><text x="0" y="0" font-family="Liberation Sans" font-weight="bold" font-size="9.6" fill="#f4f4f4" stroke="#1a1a1a" stroke-width="1.4" paint-order="stroke" transform="translate(36.2 461.2) rotate(-90)">440</text><text x="0" y="0" font-family="Liberation Sans" font-weight="bold" font-size="9.6" fill="#f4f4f4" stroke="#1a1a1a" stroke-width="1.4" paint-order="stroke" transform="translate(36.2 492.6) rotate(-90)">480</text><text x="0" y="0" font-family="Liberation Sans" font-weight="bold" font-size="9.6" fill="#f4f4f4" stroke="#1a1a1a" stroke-width="1.4" paint-order="stroke" transform="translate(36.2 524.1) rotate(-90)">520</text><text x="0" y="0" font-family="Liberation Sans" font-weight="bold" font-size="9.6" fill="#f4f4f4" stroke="#1a1a1a" stroke-width="1.4" paint-order="stroke" transform="translate(36.2 555.5) rotate(-90)">560</text><text x="0" y="0" font-family="Liberation Sans" font-weight="bold" font-size="9.6" fill="#f4f4f4" stroke="#1a1a1a" stroke-width="1.4" paint-order="stroke" transform="translate(36.2 586.9) rotate(-90)">600</text><text x="0" y="0" font-family="Liberation Sans" font-weight="bold" font-size="9.6" fill="#f4f4f4" stroke="#1a1a1a" stroke-width="1.4" paint-order="stroke" transform="translate(36.2 618.3) rotate(-90)">640</text><text x="0" y="0" font-family="Liberation Sans" font-weight="bold" font-size="9.6" fill="#f4f4f4" stroke="#1a1a1a" stroke-width="1.4" paint-order="stroke" transform="translate(36.2 649.7) rotate(-90)">680</text><text x="0" y="0" font-family="Liberation Sans" font-weight="bold" font-size="9.6" fill="#f4f4f4" stroke="#1a1a1a" stroke-width="1.4" paint-order="stroke" transform="translate(36.2 681.2) rotate(-90)">720</text><text x="0" y="0" font-family="Liberation Sans" font-weight="bold" font-size="9.6" fill="#f4f4f4" stroke="#1a1a1a" stroke-width="1.4" paint-order="stroke" transform="translate(36.2 712.6) rotate(-90)">760</text><text x="0" y="0" font-family="Liberation Sans" font-weight="bold" font-size="9.6" fill="#f4f4f4" stroke="#1a1a1a" stroke-width="1.4" paint-order="stroke" transform="translate(36.2 744.0) rotate(-90)">800</text><text x="0" y="0" font-family="Liberation Sans" font-weight="bold" font-size="9.6" fill="#f4f4f4" stroke="#1a1a1a" stroke-width="1.4" paint-order="stroke" transform="translate(36.2 775.4) rotate(-90)">840</text><text x="0" y="0" font-family="Liberation Sans" font-weight="bold" font-size="9.6" fill="#f4f4f4" stroke="#1a1a1a" stroke-width="1.4" paint-order="stroke" transform="translate(36.2 806.8) rotate(-90)">880</text></svg>
<svg class="a" style="left:4px;top:65px;opacity:1" width="11" height="11" viewBox="0 0 11 11"><circle cx="5.5" cy="5.5" r="4.5" fill="#5a5a5a"/><path d="M3.6 3.6 L7.4 7.4 M7.4 3.6 L3.6 7.4" stroke="#2a2a2a" stroke-width="1"/></svg>
<svg width="0" height="0" style="position:absolute"><defs><pattern id="chk" width="3" height="3" patternUnits="userSpaceOnUse"><rect width="1.5" height="1.5" fill="#888"/><rect x="1.5" y="1.5" width="1.5" height="1.5" fill="#888"/></pattern></defs></svg>
<svg class="a" style="left:4.5px;top:78.6px;opacity:1" width="19" height="18" viewBox="0 0 19 18"><path d="M6 2 L6 13 L8.5 10.5 L10.5 14.5 L12 13.8 L10 9.8 L13.5 9.8Z" fill="#f2f2f2" stroke="#222" stroke-width="0.5"/></svg>
<svg class="a" style="left:4.5px;top:100.7px;opacity:1" width="19" height="18" viewBox="0 0 19 18"><path d="M4.8 12.3 L5.9 5.9 L13.8 3.7 M5.9 5.9 L11.5 9.3" stroke="#f2f2f2" stroke-width="1.9" fill="none" stroke-linecap="round"/></svg>
<svg class="a" style="left:4.5px;top:120px;opacity:1" width="19" height="18" viewBox="0 0 19 18"><path d="M4 12 Q4 5 10 4" stroke="#f2f2f2" stroke-width="1.5" fill="none"/><path d="M8 7 V14 L10 12 L11.5 14.5 L12.5 14 L11 11.5 L13.5 11.5Z" fill="#f2f2f2"/><path d="M14 16 L18.5 16 L18.5 11.5Z" fill="#e0e0e0"/></svg>
<svg class="a" style="left:4.5px;top:140.7px;opacity:1" width="19" height="18" viewBox="0 0 19 18"><path d="M6 4 L11 9 Q12.5 12 10 13 Q7.5 14 5 11 L3.5 9.5" stroke="#f2f2f2" stroke-width="2.6" fill="none"/><path d="M14 16 L18.5 16 L18.5 11.5Z" fill="#e0e0e0"/></svg>
<svg class="a" style="left:4.5px;top:160px;opacity:1" width="19" height="18" viewBox="0 0 19 18"><rect x="2" y="2" width="15" height="14" rx="2" fill="#2c2c2c"/><rect x="4.5" y="4.5" width="10" height="8" stroke="#f2f2f2" stroke-width="1.4" stroke-dasharray="1.6 1.1" fill="none"/><path d="M14 16 L18.5 16 L18.5 11.5Z" fill="#e0e0e0"/></svg>
<svg class="a" style="left:4.5px;top:187.6px;opacity:1" width="19" height="18" viewBox="0 0 19 18"><path d="M4 14 L12 5 L13 6 L5.5 14.5Z" fill="#f2f2f2"/><path d="M4 9 Q4 4 8 4" stroke="#ddd" stroke-width="1" fill="none"/><path d="M14 16 L18.5 16 L18.5 11.5Z" fill="#e0e0e0"/></svg>
<svg class="a" style="left:4.5px;top:208.2px;opacity:1" width="19" height="18" viewBox="0 0 19 18"><rect x="1" y="0" width="17.5" height="18" rx="3" fill="#4579a8"/><path d="M9.5 3 L15 6.2 V12.6 L9.5 15.8 L4 12.6 V6.2Z" fill="#8a8a8a" stroke="#f0f0f0" stroke-width="1.1"/><path d="M14 16 L18.5 16 L18.5 11.5Z" fill="#e0e0e0"/></svg>
<svg class="a" style="left:4.5px;top:229px;opacity:1" width="19" height="18" viewBox="0 0 19 18"><path d="M3.5 3.5 H14 V6.5 H12.5 L12 5.2 H10 V13 H11.5 V14.5 H6 V13 H7.5 V5.2 H5.5 L5 6.5 H3.5Z" fill="#f2f2f2"/><path d="M14 16 L18.5 16 L18.5 11.5Z" fill="#e0e0e0"/></svg>
<svg class="a" style="left:4.5px;top:248px;opacity:1" width="19" height="18" viewBox="0 0 19 18"><rect x="3" y="7" width="7" height="7" fill="#aaa"/><circle cx="10.5" cy="7.5" r="4.5" fill="#ddd"/><path d="M9 6 L9 13 L11 11 L12.5 13.5 L13.5 13 L12 10.5 L14.5 10.5Z" fill="#f2f2f2" stroke="#333" stroke-width="0.5"/><path d="M14 16 L18.5 16 L18.5 11.5Z" fill="#e0e0e0"/></svg>
<svg class="a" style="left:4.5px;top:269px;opacity:1" width="19" height="18" viewBox="0 0 19 18"><ellipse cx="9" cy="9" rx="6" ry="4" transform="rotate(-40 9 9)" fill="#bbb"/><path d="M4 14 L14 4" stroke="#f2f2f2" stroke-width="1.2"/><path d="M14 16 L18.5 16 L18.5 11.5Z" fill="#e0e0e0"/></svg>
<svg class="a" style="left:4.5px;top:297px;opacity:1" width="19" height="18" viewBox="0 0 19 18"><path d="M4 12 L12 4 L14 6 L6 14Z" fill="#f2f2f2"/><circle cx="6" cy="12" r="3" fill="#999"/><path d="M14 16 L18.5 16 L18.5 11.5Z" fill="#e0e0e0"/></svg>
<svg class="a" style="left:4.5px;top:318px;opacity:1" width="19" height="18" viewBox="0 0 19 18"><rect x="3.5" y="4" width="11" height="10" rx="1" stroke="#f2f2f2" stroke-width="1.3" fill="#888"/><path d="M4 13 L14 5" stroke="#f2f2f2" stroke-width="1"/><path d="M14 16 L18.5 16 L18.5 11.5Z" fill="#e0e0e0"/></svg>
<svg class="a" style="left:4.5px;top:337px;opacity:1" width="19" height="18" viewBox="0 0 19 18"><rect x="4" y="5" width="11" height="9" stroke="#f2f2f2" stroke-width="1.3" stroke-dasharray="1.5 1" fill="#777"/><path d="M14 16 L18.5 16 L18.5 11.5Z" fill="#e0e0e0"/></svg>
<svg class="a" style="left:4.5px;top:358px;opacity:1" width="19" height="18" viewBox="0 0 19 18"><path d="M3 7 Q9 2 15 7 L12 13 Q9 11 6 13Z" fill="#aaa"/><path d="M5 8 L7 12 M9 6 V11 M13 8 L11 12" stroke="#f2f2f2" stroke-width="1.2"/><path d="M14 16 L18.5 16 L18.5 11.5Z" fill="#e0e0e0"/></svg>
<svg class="a" style="left:4.5px;top:385px;opacity:1" width="19" height="18" viewBox="0 0 19 18"><defs><linearGradient id="tg1" x1="0" y1="0" x2="1" y2="1"><stop offset="0" stop-color="#fff"/><stop offset="1" stop-color="#333"/></linearGradient></defs><rect x="3.5" y="3" width="12" height="12" fill="url(#tg1)"/><path d="M14 16 L18.5 16 L18.5 11.5Z" fill="#e0e0e0"/></svg>
<svg class="a" style="left:4.5px;top:406px;opacity:1" width="19" height="18" viewBox="0 0 19 18"><rect x="3.5" y="3" width="12" height="12" stroke="#f2f2f2" stroke-width="1.3" fill="#666"/><path d="M5 13 L8 8 L10 11 L14 5" stroke="#f2f2f2" stroke-width="1.2" fill="none"/><path d="M14 16 L18.5 16 L18.5 11.5Z" fill="#e0e0e0"/></svg>
<svg class="a" style="left:4.5px;top:425.5px;opacity:1" width="19" height="18" viewBox="0 0 19 18"><rect x="3.5" y="3" width="12" height="12" fill="#ddd"/><rect x="3.5" y="3" width="12" height="12" fill="url(#chk)"/><path d="M14 16 L18.5 16 L18.5 11.5Z" fill="#e0e0e0"/></svg>
<svg class="a" style="left:4.5px;top:446.4px;opacity:1" width="19" height="18" viewBox="0 0 19 18"><rect x="3.5" y="3.5" width="12" height="11" rx="2" stroke="#f2f2f2" stroke-width="1.3" fill="#888"/><rect x="7" y="6.5" width="5" height="5" fill="#f2f2f2"/><path d="M14 16 L18.5 16 L18.5 11.5Z" fill="#e0e0e0"/></svg>
<svg class="a" style="left:4.5px;top:467px;opacity:1" width="19" height="18" viewBox="0 0 19 18"><rect x="3" y="3" width="8" height="8" stroke="#f2f2f2" stroke-width="1.2" fill="#777"/><rect x="5.5" y="5.5" width="8" height="8" stroke="#f2f2f2" stroke-width="1.2" fill="#999"/><circle cx="11" cy="11" r="4" stroke="#f2f2f2" stroke-width="1.2" fill="#777"/><path d="M14 16 L18.5 16 L18.5 11.5Z" fill="#e0e0e0"/></svg>
<svg class="a" style="left:4.5px;top:494px;opacity:1" width="19" height="18" viewBox="0 0 19 18"><circle cx="8" cy="10" r="5" stroke="#ccc" stroke-width="1.5" fill="none"/><path d="M6 12 L13 4" stroke="#f2f2f2" stroke-width="2"/><path d="M14 16 L18.5 16 L18.5 11.5Z" fill="#e0e0e0"/></svg>
<svg class="a" style="left:4.5px;top:515px;opacity:1" width="19" height="18" viewBox="0 0 19 18"><path d="M5 2 V13 H16 M2 5 H13 V16" stroke="#f2f2f2" stroke-width="1.3" fill="none"/><rect x="6" y="6" width="6" height="6" fill="#888"/><path d="M14 16 L18.5 16 L18.5 11.5Z" fill="#e0e0e0"/></svg>
<svg class="a" style="left:4.5px;top:534.6px;opacity:1" width="19" height="18" viewBox="0 0 19 18"><path d="M3 9 A6 6 0 1 1 9 15" stroke="#f2f2f2" stroke-width="1.4" fill="none"/><path d="M1 7 L3 10 L5.5 7.5" stroke="#f2f2f2" stroke-width="1.2" fill="none"/><rect x="6" y="7" width="6" height="5" fill="#999"/><path d="M14 16 L18.5 16 L18.5 11.5Z" fill="#e0e0e0"/></svg>
<div class="a" style="left:6px;top:184px;width:15px;height:1px;background:#4e4e4e;"></div>
<div class="a" style="left:6px;top:290px;width:15px;height:1px;background:#4e4e4e;"></div>
<div class="a" style="left:6px;top:380.7px;width:15px;height:1px;background:#4e4e4e;"></div>
<div class="a" style="left:6px;top:490px;width:15px;height:1px;background:#4e4e4e;"></div>
<div class="a" style="left:467px;top:114px;width:470px;height:664px;background:#ffffff;border:1px solid #000"></div>
<svg class="a" style="left:0;top:0" width="1584" height="870" viewBox="0 0 1584 870">
<defs><linearGradient id="sg" x1="650" y1="0" x2="760" y2="0" gradientUnits="userSpaceOnUse">
<stop offset="0" stop-color="#0f6e12"/><stop offset="0.2" stop-color="#2a8a1a"/><stop offset="0.45" stop-color="#a8cc2c"/><stop offset="0.68" stop-color="#f8f834"/><stop offset="1" stop-color="#fdfd3a"/></linearGradient></defs>
<text x="682" y="112.5" font-family="Liberation Sans" font-size="9.5" fill="#f2f2f2">Artboard 1</text>
<text x="767" y="159" font-family="Liberation Sans" font-size="12.5" fill="#e6e6e6">Artboard 1</text>
<path d="M611.5 684.5 V163.5 H936" stroke="#c9d2fa" stroke-width="1" fill="none"/>
<path d="M936 163.5 H978.5 V684.5 H936" stroke="#2c3566" stroke-width="1" fill="none"/>
<path d="M611.5 684.5 H936" stroke="#c9d2fa" stroke-width="1" fill="none"/>
<polygon points="704.6,253.3 721.1,287.2 758.4,292.4 731.2,318.6 737.9,355.7 704.6,337.9 671.3,355.7 678.0,318.6 650.8,292.4 688.1,287.2" fill="url(#sg)"/>
<polygon points="704.5,375.4 781.3,431.2 752.0,521.6 657.0,521.6 627.7,431.2" fill="#0026fa"/>
<ellipse cx="704.5" cy="373.5" rx="42.5" ry="45" fill="#f8161f"/>
<rect x="610" y="507" width="185" height="66" fill="#c9993d"/>
</svg>
<div class="a" style="left:1368px;top:64.3px;width:196.5px;height:306.0px;background:#3e3e3e;border-radius:6px"></div>
<div class="a" style="left:1368px;top:64.3px;width:196.5px;height:15px;background:#393939;border-radius:6px 6px 0 0"></div>
<svg class="a" style="left:1372.8px;top:65.8px;opacity:1" width="10" height="10" viewBox="0 0 10 10"><circle cx="5" cy="5" r="4.3" fill="#5c5c5c"/><path d="M3.2 3.2 L6.8 6.8 M6.8 3.2 L3.2 6.8" stroke="#2e2e2e" stroke-width="1"/></svg>
<div class="a" style="left:1387px;top:66.3px;width:1px;height:10px;background:#555;"></div>
<div class="a" style="left:1390px;top:66.3px;width:1px;height:10px;background:#555;"></div>
<div class="a" style="left:1395.6px;top:65.8px;width:43.5px;height:13.5px;background:#444444;border-radius:6px 6px 0 0"></div>
<div class="t" style="left:1404.6px;top:67.3px;font-size:9px;color:#f0f0f0;">Color</div>
<svg class="a" style="left:1426.1px;top:67.3px;opacity:1" width="10" height="10" viewBox="0 0 10 10"><circle cx="5" cy="5" r="3.8" fill="#555"/><path d="M3.2 3.2 L6.8 6.8 M6.8 3.2 L3.2 6.8" stroke="#2e2e2e" stroke-width="1"/></svg>
<svg class="a" style="left:1549.5px;top:66.3px;opacity:1" width="11" height="11" viewBox="0 0 11 11"><rect x="0.7" y="0.7" width="9.6" height="9.6" rx="2.5" stroke="#d0d0d0" stroke-width="0.9" fill="none"/><path d="M2.5 3.6 H8.5 M2.5 5.5 H8.5 M2.5 7.4 H8.5" stroke="#d0d0d0" stroke-width="0.8"/></svg>
<div class="a" style="left:1368px;top:79.3px;width:196.5px;height:1px;background:#474747;"></div>
<svg class="a" style="left:1398px;top:68px;opacity:1" width="6" height="9" viewBox="0 0 6 9"><path d="M1 3.5 L3 1.5 L5 3.5 M1 5.5 L3 7.5 L5 5.5" stroke="#e0e0e0" stroke-width="0.9" fill="none"/></svg>
<div class="a" style="left:1382px;top:89px;width:19px;height:19px;background:#000;border:1.5px solid #e8e8e8"></div>
<div class="a" style="left:1386px;top:93px;width:11px;height:11px;background:#000;border:1.2px solid #e8e8e8"></div>
<svg class="a" style="left:1374px;top:97px;opacity:1" width="19.5" height="18.5" viewBox="0 0 19.5 18.5"><rect x="0.8" y="0.8" width="17.8" height="16.8" fill="#fafafa" stroke="#111" stroke-width="1.2"/><path d="M1.5 17 L18.5 1.5" stroke="#ff1010" stroke-width="1.3"/></svg>
<div class="t" style="left:1406px;top:91.2px;font-size:9px">R</div>
<div class="a" style="left:1416.6px;top:94.2px;width:113px;height:4.2px;background:linear-gradient(90deg,#000,#d01010 80%,#ff1a1a);border-radius:2px"></div>
<div class="a" style="left:1520.6000000000001px;top:91.4px;width:9.6px;height:9.6px;border-radius:50%;background:#d8d8d8"></div>
<div class="a" style="left:1532px;top:89.2px;width:26px;height:14px;background:#363636;border-radius:2px"></div>
<div class="t" style="left:1534.5px;top:91.2px;font-size:9px">255.0</div>
<div class="t" style="left:1406px;top:107.2px;font-size:9px">G</div>
<div class="a" style="left:1416.6px;top:110.2px;width:113px;height:4.2px;background:linear-gradient(90deg,#ff2020,#ff8830 50%,#f4f040);border-radius:2px"></div>
<div class="a" style="left:1415.4px;top:107.4px;width:9.6px;height:9.6px;border-radius:50%;background:#d8d8d8"></div>
<div class="a" style="left:1532px;top:105.2px;width:26px;height:14px;background:#363636;border-radius:2px"></div>
<div class="t" style="left:1534.5px;top:107.2px;font-size:9px">0.0</div>
<div class="t" style="left:1406px;top:123.19999999999999px;font-size:9px">B</div>
<div class="a" style="left:1416.6px;top:126.19999999999999px;width:113px;height:4.2px;background:linear-gradient(90deg,#ff1c28,#ff2a8a 50%,#f040f4);border-radius:2px"></div>
<div class="a" style="left:1415.4px;top:123.39999999999999px;width:9.6px;height:9.6px;border-radius:50%;background:#d8d8d8"></div>
<div class="a" style="left:1532px;top:121.19999999999999px;width:26px;height:14px;background:#363636;border-radius:2px"></div>
<div class="t" style="left:1534.5px;top:123.19999999999999px;font-size:9px">0.0</div>
<div class="t" style="left:1435px;top:139.5px;font-size:9px;">Hex</div>
<div class="a" style="left:1453px;top:138px;width:49px;height:12.5px;background:#353535;border-radius:2px"></div>
<div class="t" style="left:1455px;top:139.5px;font-size:9px;">#FF0000</div>
<svg class="a" style="left:1506px;top:138px;opacity:1" width="12" height="12" viewBox="0 0 12 12"><rect x="1.5" y="1.5" width="5" height="5" fill="#eee"/><circle cx="7" cy="7.5" r="3.5" stroke="#eee" stroke-width="1.2" fill="#555"/></svg>
<svg class="a" style="left:1521px;top:138px;opacity:1" width="11.5" height="12.5" viewBox="0 0 11.5 12.5"><rect x="0.5" y="0.5" width="10.5" height="11.5" fill="#fafafa"/><path d="M0.5 12 L11 0.5" stroke="#ff1010" stroke-width="1.1"/></svg>
<div class="a" style="left:1533.5px;top:137.5px;width:25px;height:13px;background:#fafafa;"></div>
<div class="a" style="left:1534px;top:138px;width:11.5px;height:12px;background:#1a1a1a;border:1.5px solid #666"></div>
<div class="a" style="left:1376.0px;top:159.8px;width:182.0px;height:182.0px;border-radius:50%;background:conic-gradient(from 90deg,#f41c2c,#f43ce0 60deg,#2a40ff 120deg,#40f0f4 180deg,#50f040 240deg,#f8f850 300deg,#f41c2c 360deg)"></div>
<div class="a" style="left:1395.0px;top:178.8px;width:144.0px;height:144.0px;border-radius:50%;background:#3e3e3e"></div>
<div class="a" style="left:1418px;top:202.5px;width:97px;height:96.5px;background:linear-gradient(to top,#000,rgba(0,0,0,0)),linear-gradient(to right,#fff,#f00)"></div>
<div class="a" style="left:1510px;top:202px;width:6px;height:6px;background:transparent;border:1px solid #d8a0a0"></div>
<div class="a" style="left:1544.5px;top:248px;width:6px;height:6px;background:transparent;border:1px solid #e0a0a0"></div>
<div class="t" style="left:1373.5px;top:352px;font-size:9px;">Opacity</div>
<div class="a" style="left:1407px;top:355px;width:111px;height:3.5px;background:#343434;border-radius:2px"></div>
<div class="a" style="left:1513.2px;top:352px;width:9.6px;height:9.6px;border-radius:50%;background:#d8d8d8"></div>
<div class="a" style="left:1523.7px;top:350px;width:34px;height:13px;background:#363636;border-radius:2px"></div>
<div class="t" style="left:1526px;top:352px;font-size:9px;">100.0%</div>
<div class="a" style="left:1368px;top:371.8px;width:196.5px;height:225.2px;background:#3e3e3e;border-radius:6px"></div>
<div class="a" style="left:1368px;top:371.8px;width:196.5px;height:15px;background:#393939;border-radius:6px 6px 0 0"></div>
<svg class="a" style="left:1372.8px;top:373.3px;opacity:1" width="10" height="10" viewBox="0 0 10 10"><circle cx="5" cy="5" r="4.3" fill="#5c5c5c"/><path d="M3.2 3.2 L6.8 6.8 M6.8 3.2 L3.2 6.8" stroke="#2e2e2e" stroke-width="1"/></svg>
<div class="a" style="left:1387px;top:373.8px;width:1px;height:10px;background:#555;"></div>
<div class="a" style="left:1390px;top:373.8px;width:1px;height:10px;background:#555;"></div>
<div class="a" style="left:1395.8px;top:373.3px;width:48.2px;height:13.5px;background:#444444;border-radius:6px 6px 0 0"></div>
<div class="t" style="left:1404.8px;top:374.8px;font-size:9px;color:#f0f0f0;">Layers</div>
<svg class="a" style="left:1431.0px;top:374.8px;opacity:1" width="10" height="10" viewBox="0 0 10 10"><circle cx="5" cy="5" r="3.8" fill="#555"/><path d="M3.2 3.2 L6.8 6.8 M6.8 3.2 L3.2 6.8" stroke="#2e2e2e" stroke-width="1"/></svg>
<svg class="a" style="left:1549.5px;top:373.8px;opacity:1" width="11" height="11" viewBox="0 0 11 11"><rect x="0.7" y="0.7" width="9.6" height="9.6" rx="2.5" stroke="#d0d0d0" stroke-width="0.9" fill="none"/><path d="M2.5 3.6 H8.5 M2.5 5.5 H8.5 M2.5 7.4 H8.5" stroke="#d0d0d0" stroke-width="0.8"/></svg>
<div class="a" style="left:1368px;top:386.8px;width:196.5px;height:1px;background:#474747;"></div>
<div class="a" style="left:1375px;top:393.4px;width:175px;height:15.2px;background:#47525f;border-radius:3px 3px 0 0"></div>
<div class="a" style="left:1376px;top:396px;width:2.5px;height:10px;background:#000;"></div>
<svg class="a" style="left:1381px;top:397px;opacity:1" width="8" height="8" viewBox="0 0 8 8"><path d="M0.5 1 H7.5 L4 7Z" fill="#e8e8e8"/></svg>
<svg class="a" style="left:1392px;top:394.5px" width="12.5" height="12.5"><rect width="12.5" height="12.5" fill="url(#chk4)"/></svg>
<div class="t" style="left:1407px;top:396px;font-size:9px;">Layer 1</div>
<div class="a" style="left:1496px;top:395px;width:13px;height:12.5px;background:#0a0a0a;border:1.2px solid #888;border-radius:1px"></div>
<svg class="a" style="left:1513.5px;top:395.5px;opacity:1" width="11" height="11" viewBox="0 0 11 11"><path d="M2.5 5 V3 Q2.5 0.8 4.5 0.8 Q6.5 0.8 6.5 3" stroke="#f4f4f4" stroke-width="1.2" fill="none"/><rect x="4" y="5" width="6.5" height="5.5" rx="0.8" fill="#f4f4f4"/></svg>
<svg class="a" style="left:1524.5px;top:395.5px;opacity:1" width="11" height="11" viewBox="0 0 11 11"><path d="M0.8 5.5 Q5.5 0.5 10.2 5.5 Q5.5 10.5 0.8 5.5Z" stroke="#f4f4f4" stroke-width="1" fill="none"/><circle cx="5.5" cy="5.5" r="1.8" fill="#f4f4f4"/></svg>
<svg class="a" style="left:1535px;top:395.5px;opacity:1" width="11" height="11" viewBox="0 0 11 11"><circle cx="5.5" cy="5.5" r="4.3" stroke="#f4f4f4" stroke-width="1.1" fill="none"/></svg>
<div class="a" style="left:1375px;top:409.8px;width:175px;height:17px;background:#4a78bf;border-radius:3px"></div>
<svg class="a" style="left:1396px;top:411.5px" width="13" height="13"><rect width="13" height="13" fill="url(#chk4)"/></svg>
<div class="t" style="left:1411px;top:413px;font-size:9px;">{Polygon}</div>
<svg class="a" style="left:1513.5px;top:413px;opacity:1" width="11" height="11" viewBox="0 0 11 11"><path d="M2.5 5 V3 Q2.5 0.8 4.5 0.8 Q6.5 0.8 6.5 3" stroke="#f4f4f4" stroke-width="1.2" fill="none"/><rect x="4" y="5" width="6.5" height="5.5" rx="0.8" fill="#f4f4f4"/></svg>
<svg class="a" style="left:1524.5px;top:413px;opacity:1" width="11" height="11" viewBox="0 0 11 11"><path d="M0.8 5.5 Q5.5 0.5 10.2 5.5 Q5.5 10.5 0.8 5.5Z" stroke="#f4f4f4" stroke-width="1" fill="none"/><circle cx="5.5" cy="5.5" r="1.8" fill="#f4f4f4"/></svg>
<svg class="a" style="left:1535px;top:413px;opacity:1" width="11" height="11" viewBox="0 0 11 11"><circle cx="5.5" cy="5.5" r="4.3" stroke="#f4f4f4" stroke-width="1.1" fill="none"/><circle cx="5.5" cy="5.5" r="2.4" fill="#f4f4f4"/></svg>
<div class="a" style="left:1551.7px;top:393px;width:5.7px;height:157px;background:#8a8a8a;border-radius:3px"></div>
<div class="a" style="left:1374.3px;top:557px;width:183.7px;height:11.4px;background:#333333;border-radius:6px"></div>
<svg class="a" style="left:1377px;top:557px;opacity:1" width="11" height="11" viewBox="0 0 11 11"><circle cx="6.5" cy="4.5" r="3" stroke="#f0f0f0" stroke-width="1.2" fill="none"/><path d="M4.5 6.5 L1.5 9.5" stroke="#f0f0f0" stroke-width="1.5"/></svg>
<svg class="a" style="left:1543px;top:557px;opacity:1" width="12" height="12" viewBox="0 0 12 12"><circle cx="5.5" cy="5.5" r="3.8" stroke="#f0f0f0" stroke-width="1.2" fill="none"/><circle cx="5.5" cy="5.5" r="1.3" fill="#f0f0f0"/><path d="M8.2 8.2 L10.5 10.5" stroke="#f0f0f0" stroke-width="1.5"/></svg>
<svg class="a" style="left:1390.7px;top:579.5px;opacity:1" width="13" height="12" viewBox="0 0 13 12"><path d="M1 3 H11 M1 8 H11" stroke="#f0f0f0" stroke-width="1.2"/><circle cx="4" cy="3" r="1.7" fill="#3e3e3e" stroke="#f0f0f0" stroke-width="1.1"/><circle cx="8" cy="8" r="1.7" fill="#3e3e3e" stroke="#f0f0f0" stroke-width="1.1"/></svg>
<svg class="a" style="left:1407.8px;top:579.5px;opacity:1" width="13" height="12" viewBox="0 0 13 12"><rect x="1" y="4" width="7" height="7" stroke="#f0f0f0" stroke-width="1.2" fill="none"/><rect x="4" y="1" width="7" height="7" stroke="#f0f0f0" stroke-width="1.2" fill="#3e3e3e"/></svg>
<svg class="a" style="left:1424.8px;top:579.5px;opacity:1" width="13" height="12" viewBox="0 0 13 12"><circle cx="6" cy="6" r="5" fill="#f0f0f0"/><circle cx="5" cy="5" r="1.8" stroke="#444" stroke-width="1" fill="none"/><circle cx="7" cy="7" r="1.8" stroke="#444" stroke-width="1" fill="none"/></svg>
<svg class="a" style="left:1442.5px;top:579.5px;opacity:1" width="13" height="12" viewBox="0 0 13 12"><rect x="1" y="1" width="10" height="10" stroke="#777" stroke-width="1" fill="none"/><circle cx="6" cy="6" r="2.5" stroke="#777" fill="none"/></svg>
<svg class="a" style="left:1460px;top:579.5px;opacity:1" width="13" height="12" viewBox="0 0 13 12"><rect x="1" y="4" width="7" height="7" stroke="#777" stroke-width="1" fill="none"/><rect x="4" y="1" width="7" height="7" stroke="#777" stroke-width="1" fill="none"/></svg>
<svg class="a" style="left:1477px;top:579.5px;opacity:1" width="13" height="12" viewBox="0 0 13 12"><rect x="0.8" y="0.8" width="10.4" height="10.4" stroke="#e0e0e0" stroke-width="1" fill="none"/><text x="2.5" y="9" font-size="7" font-style="italic" fill="#e0e0e0" font-family="Liberation Serif">fx</text></svg>
<svg class="a" style="left:1494px;top:579.5px;opacity:1" width="13" height="12" viewBox="0 0 13 12"><rect x="0.5" y="3" width="11" height="8" rx="2" fill="#f0f0f0"/><rect x="3.5" y="1.5" width="5" height="2" fill="#f0f0f0"/><circle cx="6" cy="7" r="2.2" fill="#444"/></svg>
<svg class="a" style="left:1511px;top:579.5px;opacity:1" width="13" height="12" viewBox="0 0 13 12"><rect x="0.5" y="3" width="8" height="8" fill="#f0f0f0"/><rect x="3.5" y="0.5" width="8" height="8" stroke="#f0f0f0" stroke-width="1" fill="#f0f0f0"/><path d="M4 7 H6" stroke="#888"/></svg>
<svg class="a" style="left:1528px;top:579.5px;opacity:1" width="13" height="12" viewBox="0 0 13 12"><rect x="0.5" y="0.5" width="12" height="11" rx="2" fill="#f4f4f4"/><path d="M3 6 L9 3 V9Z" fill="#333"/></svg>
<svg class="a" style="left:1546.7px;top:579.5px;opacity:1" width="13" height="12" viewBox="0 0 13 12"><path d="M1 2.5 H11 M4 2 V1 H8 V2 M2 3 L3 11 H9 L10 3" stroke="#e0e0e0" stroke-width="1.1" fill="none"/><path d="M5 4.5 V9.5 M7 4.5 V9.5" stroke="#e0e0e0" stroke-width="0.8"/></svg>
<div class="a" style="left:1368px;top:599.3px;width:196.5px;height:221.70000000000005px;background:#3e3e3e;border-radius:6px"></div>
<div class="a" style="left:1368px;top:599.3px;width:196.5px;height:15px;background:#393939;border-radius:6px 6px 0 0"></div>
<svg class="a" style="left:1372.8px;top:600.8px;opacity:1" width="10" height="10" viewBox="0 0 10 10"><circle cx="5" cy="5" r="4.3" fill="#5c5c5c"/><path d="M3.2 3.2 L6.8 6.8 M6.8 3.2 L3.2 6.8" stroke="#2e2e2e" stroke-width="1"/></svg>
<div class="a" style="left:1387px;top:601.3px;width:1px;height:10px;background:#555;"></div>
<div class="a" style="left:1390px;top:601.3px;width:1px;height:10px;background:#555;"></div>
<div class="a" style="left:1395.8px;top:600.8px;width:68.8px;height:13.5px;background:#444444;border-radius:6px 6px 0 0"></div>
<div class="t" style="left:1404.8px;top:602.3px;font-size:9px;color:#f0f0f0;">Appearance</div>
<svg class="a" style="left:1451.6px;top:602.3px;opacity:1" width="10" height="10" viewBox="0 0 10 10"><circle cx="5" cy="5" r="3.8" fill="#555"/><path d="M3.2 3.2 L6.8 6.8 M6.8 3.2 L3.2 6.8" stroke="#2e2e2e" stroke-width="1"/></svg>
<div class="t" style="left:1474px;top:602.3px;font-size:9px;color:#cfcfcf;">Tra</div>
<div class="t" style="left:1507px;top:602.3px;font-size:9px;color:#cfcfcf;">Sha</div>
<svg class="a" style="left:1549.5px;top:601.3px;opacity:1" width="11" height="11" viewBox="0 0 11 11"><rect x="0.7" y="0.7" width="9.6" height="9.6" rx="2.5" stroke="#d0d0d0" stroke-width="0.9" fill="none"/><path d="M2.5 3.6 H8.5 M2.5 5.5 H8.5 M2.5 7.4 H8.5" stroke="#d0d0d0" stroke-width="0.8"/></svg>
<div class="a" style="left:1368px;top:614.3px;width:196.5px;height:1px;background:#474747;"></div>
<div class="a" style="left:1534.7px;top:602px;width:10.7px;height:11px;background:#555;border-radius:3px"></div>
<svg class="a" style="left:1537px;top:604px;opacity:1" width="7" height="7" viewBox="0 0 7 7"><path d="M2 1 L5.5 3.5 L2 6Z" fill="#e8e8e8"/></svg>
<svg class="a" style="left:1381.5px;top:624.5px;opacity:1" width="8" height="8" viewBox="0 0 8 8"><path d="M0.5 1 H7.5 L4 7Z" fill="#e8e8e8"/></svg>
<div class="a" style="left:1392.6px;top:619.5px;width:16.5px;height:16.5px;background:#fafafa;border:1.2px solid #111"></div>
<svg class="a" style="left:1394px;top:621px;opacity:1" width="14" height="14" viewBox="0 0 14 14"><path d="M7 2.5 L11.5 5.8 L9.8 11 H4.2 L2.5 5.8Z" stroke="#c8c8c8" stroke-width="0.6" fill="none"/></svg>
<div class="t" style="left:1411.6px;top:623.5px;font-size:9px;">{Polygon}</div>
<svg class="a" style="left:1524px;top:623px;opacity:1" width="11" height="11" viewBox="0 0 11 11"><path d="M0.8 5.5 Q5.5 0.5 10.2 5.5 Q5.5 10.5 0.8 5.5Z" stroke="#f4f4f4" stroke-width="1" fill="none"/><circle cx="5.5" cy="5.5" r="1.8" fill="#f4f4f4"/></svg>
<svg class="a" style="left:1537px;top:623px;opacity:1" width="11" height="11" viewBox="0 0 11 11"><path d="M2.5 5 V3 Q2.5 0.8 4.5 0.8 Q6.5 0.8 6.5 3" stroke="#f4f4f4" stroke-width="1.2" fill="none"/><rect x="4" y="5" width="6.5" height="5.5" rx="0.8" fill="#f4f4f4"/></svg>
<svg class="a" style="left:1389.5px;top:641px;opacity:1" width="7" height="8" viewBox="0 0 7 8"><path d="M1 0.5 L6 4 L1 7.5Z" fill="#e0e0e0"/></svg>
<div class="t" style="left:1400.8px;top:640.5px;font-size:9px;">Stroke</div>
<div class="a" style="left:1440px;top:639.5px;width:42px;height:12px;background:#333;border-radius:2px"></div>
<div class="t" style="left:1442.5px;top:641px;font-size:9px;">1.0 pt</div>
<div class="a" style="left:1482px;top:639.5px;width:9px;height:12px;background:#4c4c4c;border-radius:2px"></div>
<svg class="a" style="left:1483px;top:639.5px;opacity:1" width="7" height="12" viewBox="0 0 7 12"><path d="M1.5 4.5 L3.5 2.2 L5.5 4.5 M1.5 7.5 L3.5 9.8 L5.5 7.5" stroke="#e8e8e8" stroke-width="1.1" fill="none"/></svg>
<div class="a" style="left:1492px;top:639.5px;width:9px;height:12px;background:#555;border-radius:2px"></div>
<svg class="a" style="left:1493px;top:642px;opacity:1" width="7" height="7" viewBox="0 0 7 7"><path d="M0.5 1.5 H6.5 L3.5 5Z" fill="#eee"/></svg>
<div class="a" style="left:1504.5px;top:639px;width:11.5px;height:12.5px;background:#555;border-radius:3px"></div>
<svg class="a" style="left:1505px;top:639.5px;opacity:1" width="11" height="11" viewBox="0 0 11 11"><circle cx="5.5" cy="5.5" r="3.8" stroke="#999" stroke-width="1" fill="none"/><circle cx="5.5" cy="5.5" r="1.5" fill="#999"/></svg>
<div class="a" style="left:1521px;top:639px;width:13px;height:13px;background:#0a0a0a;border:1.5px solid #777;border-radius:1px"></div>
<svg class="a" style="left:1538px;top:640px;opacity:1" width="11" height="11" viewBox="0 0 11 11"><path d="M0.8 5.5 Q5.5 0.5 10.2 5.5 Q5.5 10.5 0.8 5.5Z" stroke="#f4f4f4" stroke-width="1" fill="none"/><circle cx="5.5" cy="5.5" r="1.8" fill="#f4f4f4"/></svg>
<div class="t" style="left:1401.5px;top:658px;font-size:9px;">Transparency</div>
<div class="a" style="left:1467.7px;top:656.5px;width:40px;height:12px;background:#333;border-radius:2px"></div>
<div class="t" style="left:1470px;top:658px;font-size:9px;">100.0%</div>
<div class="a" style="left:1507.5px;top:656.5px;width:9px;height:12px;background:#4c4c4c;border-radius:2px"></div>
<svg class="a" style="left:1508.5px;top:656.5px;opacity:1" width="7" height="12" viewBox="0 0 7 12"><path d="M1.5 4.5 L3.5 2.2 L5.5 4.5 M1.5 7.5 L3.5 9.8 L5.5 7.5" stroke="#e8e8e8" stroke-width="1.1" fill="none"/></svg>
<svg class="a" style="left:1521px;top:656.5px" width="13" height="12.5"><rect width="13" height="12.5" fill="url(#chk4)"/></svg>
<svg class="a" style="left:1539px;top:657.5px;opacity:1" width="10" height="10" viewBox="0 0 10 10"><circle cx="5" cy="5" r="3.6" stroke="#999" stroke-width="0.9" fill="none"/><path d="M5 1.4 V8.6" stroke="#3e3e3e" stroke-width="1.5"/></svg>
<div class="a" style="left:1551.7px;top:620px;width:5.7px;height:170px;background:#8a8a8a;border-radius:3px"></div>
<div class="a" style="left:1375px;top:796px;width:183px;height:1px;background:#4a4a4a;"></div>
<svg class="a" style="left:1374.5px;top:801.5px;opacity:1" width="13" height="12" viewBox="0 0 13 12"><rect x="0.5" y="2" width="11" height="8.5" rx="2.5" fill="#f0f0f0"/><path d="M6 4 V8.5 M3.8 6.25 H8.2" stroke="#aaa" stroke-width="1"/></svg>
<svg class="a" style="left:1392px;top:801.5px;opacity:1" width="13" height="12" viewBox="0 0 13 12"><rect x="0.8" y="0.8" width="10.4" height="10.4" rx="2.5" stroke="#f0f0f0" stroke-width="1.1" fill="none"/><path d="M6 3 V9 M3 6 H9" stroke="#f0f0f0" stroke-width="1.3"/></svg>
<svg class="a" style="left:1409.5px;top:801.5px;opacity:1" width="13" height="12" viewBox="0 0 13 12"><path d="M1 11 L9 2 L10 3 L3 11Z" fill="#f0f0f0"/><path d="M7 9 H12 M9.5 6.5 V11.5" stroke="#f0f0f0" stroke-width="1.2"/></svg>
<svg class="a" style="left:1427px;top:801.5px;opacity:1" width="13" height="12" viewBox="0 0 13 12"><circle cx="6" cy="6" r="3.3" stroke="#e8e8e8" stroke-width="1.1" fill="none"/><path d="M6 0.5 V2.5 M6 9.5 V11.5 M0.5 6 H2.5 M9.5 6 H11.5 M2 2 L3.5 3.5 M8.5 8.5 L10 10 M10 2 L8.5 3.5 M2 10 L3.5 8.5" stroke="#e8e8e8" stroke-width="1"/></svg>
<svg class="a" style="left:1444px;top:801.5px;opacity:1" width="13" height="12" viewBox="0 0 13 12"><rect x="0.8" y="0.8" width="10.4" height="10.4" stroke="#e0e0e0" stroke-width="1" fill="none"/><text x="2.5" y="9" font-size="7" font-style="italic" fill="#e0e0e0" font-family="Liberation Serif">fx</text></svg>
<svg class="a" style="left:1461px;top:801.5px;opacity:1" width="13" height="12" viewBox="0 0 13 12"><rect x="0.5" y="3" width="11" height="8" rx="2" fill="#f0f0f0"/><rect x="3.5" y="1.5" width="5" height="2" fill="#f0f0f0"/><circle cx="6" cy="7" r="2.2" fill="#444"/></svg>
<svg class="a" style="left:1491.5px;top:801.5px;opacity:1" width="13" height="12" viewBox="0 0 13 12"><rect x="1" y="4" width="7" height="7" stroke="#777" stroke-width="1" fill="none"/><rect x="4" y="1" width="7" height="7" stroke="#777" stroke-width="1" fill="none"/></svg>
<svg class="a" style="left:1508.5px;top:801.5px;opacity:1" width="13" height="12" viewBox="0 0 13 12"><circle cx="6" cy="6" r="5" stroke="#f0f0f0" stroke-width="1.1" fill="none"/><path d="M4 4 L8 8 M8 4 L4 8" stroke="#f0f0f0" stroke-width="1.1"/></svg>
<svg class="a" style="left:1526px;top:801.5px;opacity:1" width="13" height="12" viewBox="0 0 13 12"><path d="M2 8 Q2 3 7 3 H10 M10 4 Q10 9 5 9 H2 M1 11 L11 1" stroke="#f0f0f0" stroke-width="1.3" fill="none"/></svg>
<svg class="a" style="left:1543px;top:801.5px;opacity:1" width="13" height="12" viewBox="0 0 13 12"><path d="M1 2.5 H11 M4 2 V1 H8 V2 M2 3 L3 11 H9 L10 3" stroke="#e0e0e0" stroke-width="1.1" fill="none"/><path d="M5 4.5 V9.5 M7 4.5 V9.5" stroke="#e0e0e0" stroke-width="0.8"/></svg>
<svg class="a" style="left:1357px;top:801px;opacity:1" width="11" height="8" viewBox="0 0 11 8"><path d="M2 2 L5.5 5.5 L9 2" stroke="#ddd" stroke-width="1.1" fill="none"/></svg>
<svg class="a" style="left:1348px;top:811px;opacity:1" width="9" height="10" viewBox="0 0 9 10"><path d="M2.5 1.5 L6 5 L2.5 8.5" stroke="#ddd" stroke-width="1.1" fill="none"/></svg>
<svg class="a" style="left:1357px;top:810px;opacity:1" width="11" height="11" viewBox="0 0 11 11"><rect x="1.5" y="1.5" width="8" height="8" stroke="#ddd" stroke-width="0.9" fill="none"/><path d="M5.5 1.5 V9.5 M1.5 5.5 H9.5" stroke="#ddd" stroke-width="0.9"/></svg>
<div class="a" style="left:1357.7px;top:469.7px;width:8.8px;height:70.3px;background:#767676;border-radius:4.4px"></div>
<div class="a" style="left:1367px;top:78px;width:1px;height:743px;background:#262626;"></div>
<div class="a" style="left:1565.3px;top:64px;width:16.5px;height:757px;background:#2f2f2f;border-radius:6px"></div>
<svg class="a" style="left:1567px;top:67px;opacity:1" width="14" height="10" viewBox="0 0 14 10"><path d="M2 3 H12 M2 6 H12" stroke="#ccc" stroke-width="1.3" stroke-dasharray="1.3 1"/></svg>
<svg class="a" style="left:1567px;top:78px;opacity:1" width="14" height="12" viewBox="0 0 14 12"><circle cx="3.5" cy="3" r="1.6" stroke="#ddd" stroke-width="0.9" fill="none"/><circle cx="3.5" cy="8.5" r="1.6" stroke="#ddd" stroke-width="0.9" fill="none"/><path d="M6.5 1.5 H12.5 M6.5 4 H12.5 M6.5 7 H12.5 M6.5 9.8 H12.5" stroke="#ddd" stroke-width="0.8"/></svg>
<div class="a" style="left:1566.5px;top:127.8px;width:14.5px;height:13.0px;background:#fafafa;"></div>
<div class="a" style="left:1566.5px;top:140.5px;width:14.5px;height:12.8px;background:#48f2f4;"></div>
<div class="a" style="left:1566.5px;top:153px;width:14.5px;height:12.3px;background:#ea42ee;"></div>
<div class="a" style="left:1566.5px;top:165px;width:14.5px;height:13.3px;background:#f6ee3e;"></div>
<div class="a" style="left:1566.5px;top:178px;width:14.5px;height:12.9px;background:#f21c22;"></div>
<div class="a" style="left:1566.5px;top:190.6px;width:14.5px;height:12.7px;background:#48ec48;"></div>
<div class="a" style="left:1566.5px;top:203px;width:14.5px;height:11.8px;background:#0a3af4;"></div>
<div class="a" style="left:1566.5px;top:214.5px;width:14.5px;height:12.8px;background:#fbfbfb;"></div>
<div class="a" style="left:1566.5px;top:227px;width:14.5px;height:13.3px;background:#e0e0e0;"></div>
<div class="a" style="left:1566.5px;top:240px;width:14.5px;height:12.3px;background:#cbcbcb;"></div>
<div class="a" style="left:1566.5px;top:252px;width:14.5px;height:12.8px;background:#b3b3b3;"></div>
<div class="a" style="left:1566.5px;top:264.5px;width:14.5px;height:12.8px;background:#9b9b9b;"></div>
<div class="a" style="left:1566.5px;top:277px;width:14.5px;height:12.8px;background:#828282;"></div>
<div class="a" style="left:1566.5px;top:289.5px;width:14.5px;height:12.8px;background:#6a6a6a;"></div>
<div class="a" style="left:1566.5px;top:302px;width:14.5px;height:12.3px;background:#515151;"></div>
<div class="a" style="left:1566.5px;top:314px;width:14.5px;height:13.3px;background:#393939;"></div>
<div class="a" style="left:1566.5px;top:327px;width:14.5px;height:12.3px;background:#1d1d1d;"></div>
<div class="a" style="left:1566.5px;top:339px;width:14.5px;height:12.8px;background:#000000;"></div>
<div class="a" style="left:1566.5px;top:351.5px;width:14.5px;height:12.8px;background:#001d82;"></div>
<div class="a" style="left:1566.5px;top:364px;width:14.5px;height:13.3px;background:#0a46f4;"></div>
<div class="a" style="left:1566.5px;top:377px;width:14.5px;height:12.3px;background:#267a26;"></div>
<div class="a" style="left:1566.5px;top:389px;width:14.5px;height:12.3px;background:#248282;"></div>
<div class="a" style="left:1566.5px;top:401px;width:14.5px;height:12.3px;background:#1e8cf4;"></div>
<div class="a" style="left:1566.5px;top:413px;width:14.5px;height:12.3px;background:#4aee48;"></div>
<div class="a" style="left:1566.5px;top:425px;width:14.5px;height:12.8px;background:#48ee8a;"></div>
<div class="a" style="left:1566.5px;top:437.5px;width:14.5px;height:12.8px;background:#48f4f4;"></div>
<div class="a" style="left:1566.5px;top:452px;width:14.5px;height:10.8px;background:#7a0a12;"></div>
<div class="a" style="left:1566.5px;top:462.5px;width:14.5px;height:12.8px;background:#7c1e7e;"></div>
<div class="a" style="left:1566.5px;top:475px;width:14.5px;height:12.8px;background:#6e44ee;"></div>
<div class="a" style="left:1566.5px;top:487.5px;width:14.5px;height:12.8px;background:#807422;"></div>
<div class="a" style="left:1566.5px;top:500px;width:14.5px;height:12.3px;background:#7a8cf2;"></div>
<div class="a" style="left:1566.5px;top:512px;width:14.5px;height:13.3px;background:#8cf042;"></div>
<div class="a" style="left:1566.5px;top:525px;width:14.5px;height:12.8px;background:#8cf08e;"></div>
<div class="a" style="left:1566.5px;top:537.5px;width:14.5px;height:12.8px;background:#8cf6f6;"></div>
<div class="a" style="left:1566.5px;top:550px;width:14.5px;height:12.3px;background:#f21c22;"></div>
<div class="a" style="left:1566.5px;top:562px;width:14.5px;height:13.3px;background:#ee2480;"></div>
<div class="a" style="left:1566.5px;top:575px;width:14.5px;height:12.3px;background:#ee40ee;"></div>
<div class="a" style="left:1566.5px;top:587px;width:14.5px;height:11.3px;background:#f28032;"></div>
<div class="a" style="left:1566.5px;top:598px;width:14.5px;height:13.3px;background:#f28282;"></div>
<div class="a" style="left:1566.5px;top:611px;width:14.5px;height:12.3px;background:#f28af2;"></div>
<div class="a" style="left:1566.5px;top:623px;width:14.5px;height:13.3px;background:#f8ee3e;"></div>
<div class="a" style="left:1566.5px;top:636px;width:14.5px;height:12.3px;background:#f8f294;"></div>
<div class="a" style="left:1566.5px;top:650px;width:14.5px;height:10.3px;background:#6e3034;"></div>
<div class="a" style="left:1566.5px;top:660px;width:14.5px;height:13.3px;background:#a2323a;"></div>
<div class="a" style="left:1566.5px;top:673px;width:14.5px;height:12.3px;background:#a07078;"></div>
<div class="a" style="left:1566.5px;top:685px;width:14.5px;height:12.3px;background:#d2363e;"></div>
<div class="a" style="left:1566.5px;top:697px;width:14.5px;height:12.8px;background:#d27074;"></div>
<div class="a" style="left:1566.5px;top:709.5px;width:14.5px;height:12.8px;background:#d8a8ae;"></div>
<div class="a" style="left:1566.5px;top:722px;width:14.5px;height:12.3px;background:#a26a3c;"></div>
<div class="a" style="left:1566.5px;top:734px;width:14.5px;height:12.8px;background:#d06a3c;"></div>
<div class="a" style="left:1566.5px;top:746.5px;width:14.5px;height:12.3px;background:#d0a046;"></div>
<div class="a" style="left:1566.5px;top:758.5px;width:14.5px;height:12.8px;background:#d0a074;"></div>
<div class="a" style="left:1566.5px;top:771px;width:14.5px;height:13.1px;background:#686838;"></div>
<div class="a" style="left:1566.5px;top:783.8px;width:14.5px;height:12.9px;background:#a8a042;"></div>
<div class="a" style="left:1566.5px;top:796.4px;width:14.5px;height:10.9px;background:#b2aa74;"></div>
<svg class="a" style="left:1566.5px;top:91px;opacity:1" width="14.5" height="13" viewBox="0 0 14.5 13"><rect width="14.5" height="13" fill="#fafafa"/><path d="M0 13 L14.5 0" stroke="#ff1010" stroke-width="1.1"/></svg>
<div class="a" style="left:1566.5px;top:104.8px;width:14.5px;height:22.2px;background:#000;"></div>
<svg class="a" style="left:1566.5px;top:104.8px;opacity:1" width="14.5" height="22" viewBox="0 0 14.5 22"><path d="M14.5 2.2 V11.5 H5Z" fill="#555"/></svg>
<svg class="a" style="left:1567px;top:808px;opacity:1" width="14" height="12" viewBox="0 0 14 12"><rect x="1.5" y="1" width="11" height="7" rx="1.5" fill="#e0e0e0"/><path d="M3 8 L3 11 L6 8Z" fill="#e0e0e0"/><path d="M4 3.5 H10 M4 5.5 H10" stroke="#555" stroke-width="0.9"/></svg>
<div class="a" style="left:40.4px;top:811.4px;width:42.3px;height:9.6px;background:#4e4e4e;border-radius:5px"></div>
<div class="t" style="left:44.4px;top:811.3px;font-size:9px;line-height:10px;color:#eaeaea">76.26%</div>
<svg class="a" style="left:72.69999999999999px;top:812.5px;opacity:1" width="8" height="7" viewBox="0 0 8 7"><path d="M1 1.5 L4 5 L7 1.5" stroke="#e0e0e0" stroke-width="1" fill="none"/></svg>
<div class="a" style="left:85px;top:811.4px;width:36px;height:9.6px;background:#4e4e4e;border-radius:5px"></div>
<div class="t" style="left:89px;top:811.3px;font-size:9px;line-height:10px;color:#eaeaea">0.0°</div>
<svg class="a" style="left:111px;top:812.5px;opacity:1" width="8" height="7" viewBox="0 0 8 7"><path d="M1 1.5 L4 5 L7 1.5" stroke="#e0e0e0" stroke-width="1" fill="none"/></svg>
<svg class="a" style="left:124px;top:812px;opacity:1" width="9" height="8" viewBox="0 0 9 8"><path d="M1 0.5 V7.5" stroke="#eee" stroke-width="1.4"/><path d="M8 0.5 L2.5 4 L8 7.5Z" fill="#eee"/></svg>
<svg class="a" style="left:135.5px;top:812px;opacity:1" width="6" height="8" viewBox="0 0 6 8"><path d="M5.5 0.5 L0.5 4 L5.5 7.5Z" fill="#eee"/></svg>
<div class="a" style="left:142.7px;top:811.4px;width:34.7px;height:9.6px;background:#4e4e4e;border-radius:5px"></div>
<div class="t" style="left:146.7px;top:811.3px;font-size:9px;line-height:10px;color:#eaeaea">1</div>
<svg class="a" style="left:167.39999999999998px;top:812.5px;opacity:1" width="8" height="7" viewBox="0 0 8 7"><path d="M1 1.5 L4 5 L7 1.5" stroke="#e0e0e0" stroke-width="1" fill="none"/></svg>
<svg class="a" style="left:179px;top:812px;opacity:1" width="6" height="8" viewBox="0 0 6 8"><path d="M0.5 0.5 L5.5 4 L0.5 7.5Z" fill="#eee"/></svg>
<svg class="a" style="left:188.5px;top:812px;opacity:1" width="9" height="8" viewBox="0 0 9 8"><path d="M8 0.5 V7.5" stroke="#eee" stroke-width="1.4"/><path d="M1 0.5 L6.5 4 L1 7.5Z" fill="#eee"/></svg>
<div class="a" style="left:198.3px;top:811.4px;width:111.1px;height:9.6px;background:#4e4e4e;border-radius:5px"></div>
<div class="t" style="left:202.3px;top:811.3px;font-size:9px;line-height:10px;color:#eaeaea">{Polygon}</div>
<svg class="a" style="left:299.4px;top:812.5px;opacity:1" width="8" height="7" viewBox="0 0 8 7"><path d="M1 1.5 L4 5 L7 1.5" stroke="#e0e0e0" stroke-width="1" fill="none"/></svg>
<div class="a" style="left:312px;top:811.5px;width:8.8px;height:9.5px;background:#e84848;border-radius:1px"></div>
<svg class="a" style="left:312px;top:811.5px;opacity:1" width="9" height="9.5" viewBox="0 0 9 9.5"><path d="M2 2 H7 M4.5 3 V7 M2.8 5.5 L4.5 7.5 L6.2 5.5" stroke="#fff" stroke-width="0.9" fill="none"/></svg>
<svg class="a" style="left:323px;top:811.5px;opacity:1" width="8" height="10" viewBox="0 0 8 10"><path d="M6 1 L2 5 L6 9" stroke="#e0e0e0" stroke-width="1.2" fill="none"/></svg>
<div class="a" style="left:677.6px;top:811.3px;width:101.8px;height:9.9px;background:#6a6a6a;border-radius:5px"></div>
<svg class="a" style="left:26px;top:822px;opacity:1" width="8" height="14" viewBox="0 0 8 14"><circle cx="2.2" cy="2" r="1.05" fill="#f4f4f4"/><circle cx="2.2" cy="4.6" r="1.05" fill="#f4f4f4"/><circle cx="2.2" cy="7.2" r="1.05" fill="#f4f4f4"/><circle cx="2.2" cy="9.8" r="1.05" fill="#f4f4f4"/><circle cx="2.2" cy="12.4" r="1.05" fill="#f4f4f4"/><circle cx="5.8" cy="2" r="1.05" fill="#f4f4f4"/><circle cx="5.8" cy="4.6" r="1.05" fill="#f4f4f4"/><circle cx="5.8" cy="7.2" r="1.05" fill="#f4f4f4"/><circle cx="5.8" cy="9.8" r="1.05" fill="#f4f4f4"/><circle cx="5.8" cy="12.4" r="1.05" fill="#f4f4f4"/></svg>
<svg class="a" style="left:36px;top:824px;opacity:1" width="5" height="9" viewBox="0 0 5 9"><path d="M0.5 0.5 L4.5 4.5 L0.5 8.5Z" fill="#aaa"/></svg>
<svg class="a" style="left:42px;top:822px;opacity:1" width="12" height="13" viewBox="0 0 12 13"><circle cx="5" cy="7.5" r="4" stroke="#c8c8c8" stroke-width="1.3" fill="none"/><path d="M4 8 L10 2" stroke="#e8e8e8" stroke-width="1.6"/><path d="M10 12 L12 12 L12 10Z" fill="#ddd"/></svg>
<svg class="a" style="left:57.5px;top:823px;opacity:1" width="7" height="11" viewBox="0 0 7 11"><path d="M5.5 1 L1.5 5.5 L5.5 10" stroke="#c8c8c8" stroke-width="1.2" fill="none"/></svg>
<div class="a" style="left:67px;top:822px;width:68.7px;height:13.5px;background:#1a1a2a;"></div>
<svg class="a" style="left:67px;top:822.5px;opacity:1" width="14" height="13" viewBox="0 0 14 13"><rect width="14" height="13" fill="#fafafa"/><path d="M0.5 12.5 L13.5 0.5" stroke="#ff6060" stroke-width="0.9"/></svg>
<div class="a" style="left:81px;top:822.5px;width:13.6px;height:13px;background:#c99a3d;"></div>
<div class="a" style="left:94.6px;top:822.5px;width:13.6px;height:13px;background:#0a28f8;"></div>
<div class="a" style="left:108.2px;top:822.5px;width:13.6px;height:13px;background:#f8161f;"></div>
<div class="a" style="left:121.8px;top:822.5px;width:13.5px;height:13px;background:linear-gradient(90deg,#108010,#f8f834 60%,#f8f834);"></div>
<svg class="a" style="left:10.3px;top:839.5px;opacity:1" width="18" height="18" viewBox="0 0 18 18"><path d="M9 2 L10.5 4.2 L13 3.5 L13.6 6 L16 7 L15 9 L16 11 L13.6 12 L13 14.5 L10.5 13.8 L9 16 L7.5 13.8 L5 14.5 L4.4 12 L2 11 L3 9 L2 7 L4.4 6 L5 3.5 L7.5 4.2Z" fill="#f4f4f4"/><circle cx="9" cy="9" r="2.8" fill="#4a4a4a"/><path d="M16 15 L17.5 15 L17.5 13.5Z" fill="#ddd"/></svg>
<div class="t" style="left:32.8px;top:843px;font-family:'Liberation Serif',serif;font-size:8.7px;line-height:11px;font-weight:normal;color:#f4f4f4;text-shadow:0 0 0.4px #fff,0 0 1px #222;transform:none">Width: 176.61098901</div>
<div class="t" style="left:112.5px;top:843px;font-family:'Liberation Serif',serif;font-size:8.7px;line-height:11px;font-weight:normal;color:#f4f4f4;text-shadow:0 0 0.4px #fff,0 0 1px #222;transform:none">Height: 167.96703194</div>
<div class="t" style="left:194.6px;top:843px;font-family:'Liberation Serif',serif;font-size:8.7px;line-height:11px;font-weight:normal;color:#f4f4f4;text-shadow:0 0 0.4px #fff,0 0 1px #222;transform:none">Center ( X: 151.15896606, Y: 228.76869511)</div>
<div class="t" style="left:356.7px;top:843px;font-family:'Liberation Serif',serif;font-size:8.7px;line-height:11px;font-weight:normal;color:#f4f4f4;text-shadow:0 0 0.4px #fff,0 0 1px #222;transform:none">Points</div>
<div class="t" style="left:382.2px;top:843px;font-family:'Liberation Serif',serif;font-size:8.7px;line-height:11px;font-weight:normal;color:#f4f4f4;text-shadow:0 0 0.4px #fff,0 0 1px #222;transform:none">|</div>
<div class="t" style="left:388.7px;top:843px;font-family:'Liberation Serif',serif;font-size:8.7px;line-height:11px;font-weight:normal;color:#f4f4f4;text-shadow:0 0 0.4px #fff,0 0 1px #222;transform:none">Parametric Shape: Star (5 Point)</div>
<svg class="a" style="left:993px;top:838.5px;opacity:1" width="19" height="19" viewBox="0 0 19 19"><g transform="rotate(42 9.5 9.5)"><rect x="4" y="2.5" width="11" height="14" rx="2" fill="#2a2a2a" stroke="#101818" stroke-width="2.2"/><rect x="4" y="2.5" width="11" height="14" rx="2" fill="#3a3a3a" stroke="#e8e8e8" stroke-width="1.1"/><path d="M4.6 7.5 Q9.5 6 14.4 7.5 V14.5 Q14.4 15.9 13 15.9 H6 Q4.6 15.9 4.6 14.5Z" fill="#ff0a0a"/><path d="M6 10 L12 8.5" stroke="#ff8080" stroke-width="0.6"/></g></svg>
<div class="a" style="left:1017px;top:839px;width:16.5px;height:17px;background:linear-gradient(90deg,#107a10,#f8f834 58%,#f8f834);box-shadow:1px 0 0 #102060"></div>
<div class="t" style="left:1040px;top:842px;font-family:'Liberation Serif',serif;font-size:8.7px;line-height:11px;font-weight:normal;color:#f4f4f4;text-shadow:0 0 0.4px #fff,0 0 1px #222;transform:none">Gradient</div>
<svg class="a" style="left:1164px;top:838px;opacity:1" width="19" height="19" viewBox="0 0 19 19"><path d="M1.5 15.5 L3 9.5 L10.5 2.5 L14.5 6.5 L7.5 13.8Z" fill="#1a2030"/><path d="M2.3 14.7 L3.7 9.8 L10.5 3.5 L13.5 6.5 L7 13Z" fill="#e4b63a"/><path d="M2.3 14.7 L9 8 M3.7 9.8 L7 13" stroke="#a07a18" stroke-width="0.7"/><path d="M10.5 2.5 L12.3 0.8 L16.2 4.7 L14.5 6.5Z" fill="#111"/><path d="M5 11.5 L12 5" stroke="#fff3b0" stroke-width="0.6"/></svg>
<div class="a" style="left:1187px;top:840.7px;width:15px;height:14.5px;background:#000;"></div>
<div class="t" style="left:1209px;top:843px;font-family:'Liberation Serif',serif;font-size:8.7px;line-height:11px;font-weight:normal;color:#f4f4f4;text-shadow:0 0 0.4px #fff,0 0 1px #222;transform:none">R: 0 B: 0 :G:0 (#000000) Hairline</div>
<svg class="a" style="left:0;top:0" width="1584" height="870" viewBox="0 0 1584 870">
<defs><clipPath id="outside"><path clip-rule="evenodd" d="M0 0 H1584 V870 H0Z M467 114 H937 V778 H467Z"/></clipPath></defs>
<g clip-path="url(#outside)" opacity="0.85">
<line x1="787.6363961030679" y1="222.63639610306788" x2="628.2325901807804" y2="63.23259018078046" stroke="#0b240b" stroke-width="5.2"/><polygon points="622.1,57.1 625.5,68.8 633.8,60.5" fill="#0b240b" stroke="#0b240b" stroke-width="1.08" stroke-linejoin="round"/>
<line x1="851.6836536336966" y1="183.58533555259646" x2="707.1211520992834" y2="59.81275898801524" stroke="#0b240b" stroke-width="5.2"/><polygon points="700.5,54.2 704.8,65.6 712.5,56.6" fill="#0b240b" stroke="#0b240b" stroke-width="1.08" stroke-linejoin="round"/>
<line x1="823.7460102181882" y1="252.1365828408381" x2="993.4116395717698" y2="828.9007922468911" stroke="#0b240b" stroke-width="5.2"/><polygon points="995.9,837.2 998.5,825.3 987.2,828.6" fill="#0b240b" stroke="#0b240b" stroke-width="1.08" stroke-linejoin="round"/>
<line x1="913.6657483912813" y1="208.16437097820327" x2="1163.2517089949795" y2="832.129272487449" stroke="#0b240b" stroke-width="5.2"/><polygon points="1166.5,840.2 1168.0,828.1 1157.0,832.5" fill="#0b240b" stroke="#0b240b" stroke-width="1.08" stroke-linejoin="round"/>
<text x="857" y="200" font-family="Liberation Serif" font-size="22.2" fill="#0b240b" stroke="#0b240b" stroke-width="1.6"><tspan font-weight="bold">Outline</tspan><tspan font-style="italic"> Icon</tspan></text>
</g>
<line x1="787.0" y1="222.0" x2="627.5961940777125" y2="62.59619407771257" stroke="#ff1aff" stroke-width="3.2"/><polygon points="623.0,58.0 625.5,67.5 632.5,60.5" fill="#ff1aff" stroke="#ff1aff" stroke-width="0.0" stroke-linejoin="round"/>
<line x1="851.0" y1="183.0" x2="706.4374984655868" y2="59.22742343541879" stroke="#ff1aff" stroke-width="3.2"/><polygon points="701.5,55.0 704.7,64.3 711.2,56.7" fill="#ff1aff" stroke="#ff1aff" stroke-width="0.0" stroke-linejoin="round"/>
<line x1="824.0" y1="253.0" x2="993.6656293535816" y2="829.7642094060529" stroke="#ff1aff" stroke-width="3.2"/><polygon points="995.5,836.0 997.9,826.4 988.3,829.3" fill="#ff1aff" stroke="#ff1aff" stroke-width="0.0" stroke-linejoin="round"/>
<line x1="914.0" y1="209.0" x2="1163.5859606036981" y2="832.9649015092458" stroke="#ff1aff" stroke-width="3.2"/><polygon points="1166.0,839.0 1167.5,829.3 1158.2,833.0" fill="#ff1aff" stroke="#ff1aff" stroke-width="0.0" stroke-linejoin="round"/>
<text x="857" y="200" font-family="Liberation Serif" font-size="22.2" fill="#ff00ff"><tspan font-weight="bold">Outline</tspan><tspan font-style="italic"> Icon</tspan></text>
<text x="791" y="244" font-family="Liberation Serif" font-size="21" fill="#ff00ff"><tspan font-weight="bold">Fill</tspan><tspan> Icon</tspan></text>
</svg>
</body></html>
